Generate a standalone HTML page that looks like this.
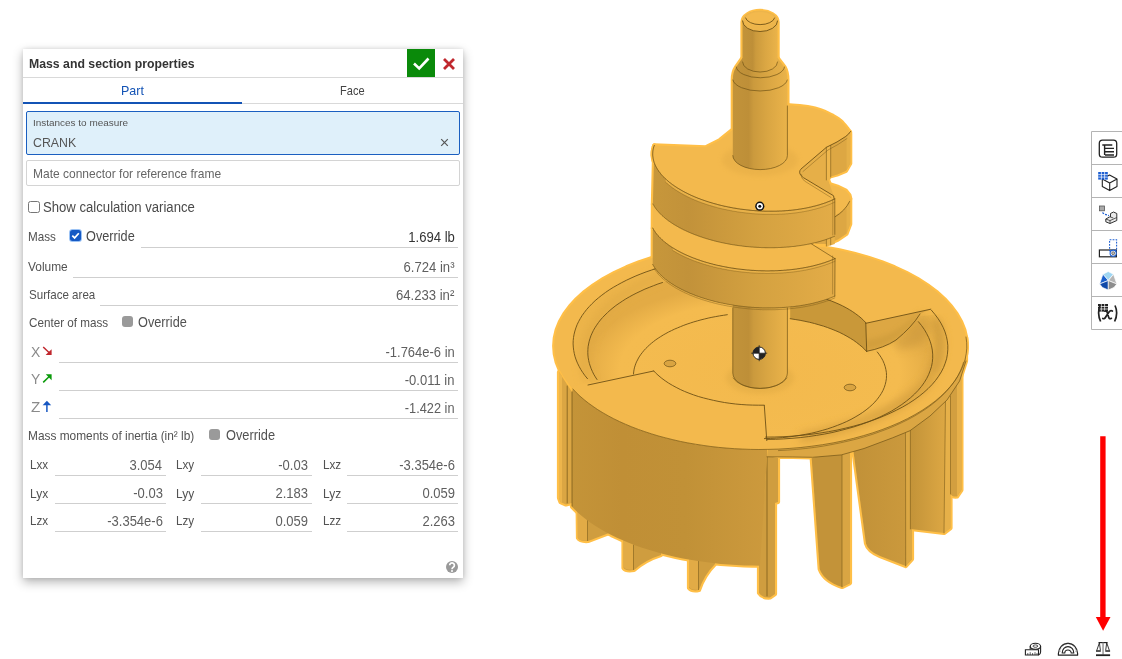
<!DOCTYPE html>
<html><head><meta charset="utf-8">
<style>
html,body{margin:0;padding:0;background:#fff;}
body{width:1122px;height:659px;position:relative;overflow:hidden;font-family:"Liberation Sans",sans-serif;}
#model{position:absolute;left:0;top:0;}
#dlg{position:absolute;left:23px;top:49px;width:440px;height:529px;background:#fff;box-shadow:0 4px 10px rgba(0,0,0,.30),0 0 4px rgba(0,0,0,.10);}
.t{position:absolute;white-space:nowrap;transform-origin:0 0;line-height:1;color:#555;font-size:13px;}
.r{transform-origin:100% 0;}
.ln{position:absolute;height:1px;background:#cfcfcf;}
.cb{position:absolute;width:11px;height:11px;border-radius:3px;background:#9a9a9a;}
</style></head><body>
<svg id="model" width="1122" height="659" viewBox="0 0 1122 659">

<defs>
<linearGradient id="gCyl" x1="0" x2="1" y1="0" y2="0"><stop offset="0" stop-color="#C2933A"/><stop offset=".29" stop-color="#BE8F38"/><stop offset=".38" stop-color="#CB9A3D"/><stop offset=".65" stop-color="#DAA643"/><stop offset="1" stop-color="#EAB34A"/></linearGradient>
<linearGradient id="gWeb" gradientUnits="userSpaceOnUse" x1="652" x2="835" y1="0" y2="0"><stop offset="0" stop-color="#C7973B"/><stop offset=".2" stop-color="#C2923A"/><stop offset=".4" stop-color="#CC9A3D"/><stop offset=".6" stop-color="#D5A241"/><stop offset=".8" stop-color="#DCA744"/><stop offset="1" stop-color="#E3AC47"/></linearGradient>
<linearGradient id="gWall" gradientUnits="userSpaceOnUse" x1="559" x2="770" y1="0" y2="0"><stop offset="0" stop-color="#C59539"/><stop offset=".3" stop-color="#C08F36"/><stop offset=".6" stop-color="#C19137"/><stop offset="1" stop-color="#CD9A3D"/></linearGradient>
<linearGradient id="gB3" gradientUnits="userSpaceOnUse" x1="912" x2="950" y1="0" y2="0"><stop offset="0" stop-color="#C49439"/><stop offset="1" stop-color="#E0AA45"/></linearGradient>
<linearGradient id="gB2" gradientUnits="userSpaceOnUse" x1="853" x2="912" y1="0" y2="0"><stop offset="0" stop-color="#C19138"/><stop offset="1" stop-color="#CC9A3D"/></linearGradient>
<radialGradient id="gFloor" gradientUnits="userSpaceOnUse" cx="760" cy="372" r="175" gradientTransform="translate(0 186) scale(1 .5)"><stop offset="0" stop-color="#F3B94D"/><stop offset=".8" stop-color="#F4BB4F"/><stop offset="1" stop-color="#E3AB45"/></radialGradient>
<filter id="blur2" x="-20%" y="-20%" width="140%" height="140%"><feGaussianBlur stdDeviation="2.5"/></filter>
<filter id="blur4" x="-20%" y="-20%" width="140%" height="140%"><feGaussianBlur stdDeviation="4"/></filter>
</defs>
<g fill="#FFBF47" stroke="#FFBF47" stroke-width="4.2" stroke-linejoin="round"><path d="M559.0 372.0 L572.0 392.0 L572.0 503.0 L566.0 504.5 L560.5 502.0 L559.0 498.0 Z"/><path d="M577.6 505 L578 538 Q580 541.5 588 541 Q596 538 609 533 L609 520 Z"/><path d="M623.5 535 L623.5 568 Q626 571.5 634 570 Q645 560 661 555 L661 545 Z"/><path d="M689 552 L689 588 Q692 591.5 699 590 Q704 575 715 564 L715 556 Z"/><path d="M759 560 L759 593 Q762 598 770 597.5 L775 594 L775 503 L778 502 L778 458 L767 456 Z"/><path d="M811.7 458 L819.7 569 Q824 581 842 587 L850 583 L850 449 Z"/><path d="M853 448 L866 543.4 Q868 551 880 556 L905.7 566 L912 559 L912 428 Z"/><path d="M910.4 425 L910.4 529 L944 533 L950.5 528 L950.5 392 Z"/><path d="M950.5 392 L950.5 494 Q952 497 957 496.5 L961.4 490 L961.4 374 Z"/><path d="M572.0 392.0 L572.8 388.9 L576.3 392.6 L580.0 396.2 L584.1 399.7 L588.4 403.1 L593.0 406.4 L597.8 409.7 L602.9 412.8 L608.3 415.9 L613.8 418.8 L619.6 421.6 L625.6 424.3 L631.8 426.9 L638.3 429.4 L644.9 431.7 L651.6 433.9 L658.6 436.0 L665.7 437.9 L672.9 439.7 L680.3 441.4 L687.8 442.9 L695.4 444.2 L703.1 445.4 L710.9 446.5 L718.8 447.4 L726.7 448.1 L734.7 448.7 L742.8 449.1 L750.8 449.4 L758.9 449.5 L767.0 449.4 L767.0 457.0 L760.0 565.7 L760.0 565.7 L752.1 565.6 L744.2 565.4 L736.3 565.0 L728.5 564.5 L720.7 563.9 L713.0 563.1 L705.3 562.1 L697.7 561.0 L690.2 559.8 L682.8 558.4 L675.6 556.9 L668.4 555.3 L661.4 553.5 L654.5 551.6 L647.8 549.6 L641.3 547.5 L634.9 545.2 L628.7 542.8 L622.7 540.3 L616.9 537.7 L611.3 535.0 L606.0 532.2 L600.8 529.3 L595.9 526.3 L591.3 523.2 L586.8 520.0 L582.7 516.8 L578.8 513.4 L575.2 510.0 L572.0 506.8 Z"/><path d="M767.7 449.4 L778.8 449.1 L789.9 448.4 L800.9 447.5 L811.8 446.2 L822.5 444.7 L833.1 442.9 L843.4 440.8 L853.5 438.4 L863.3 435.7 L872.9 432.8 L882.1 429.6 L890.9 426.2 L899.3 422.6 L907.4 418.7 L915.0 414.6 L922.2 410.3 L928.9 405.8 L935.1 401.2 L940.8 396.3 L945.9 391.4 L950.5 386.3 L954.6 381.1 L958.1 375.7 L961.0 370.3 L963.3 364.9 L965.1 359.3 L966.2 353.8 L966.8 348.2 L966.7 342.6 L966.0 337.0 L966.0 361.0 L959.6 381.0 L947.0 400.0 L930.0 416.0 L910.0 430.7 L892.6 437.8 L864.0 448.5 L841.3 454.9 L812.7 457.3 L792.8 457.0 L767.0 456.8 Z"/><path d="M966.8 346.0 L966.2 354.1 L964.3 362.2 L961.1 370.2 L956.7 378.0 L951.1 385.6 L944.3 393.0 L936.4 400.1 L927.4 406.8 L917.4 413.2 L906.4 419.2 L894.5 424.7 L881.8 429.7 L868.3 434.2 L854.2 438.2 L839.4 441.6 L824.3 444.4 L808.7 446.6 L792.8 448.2 L776.7 449.2 L760.5 449.5 L744.3 449.2 L728.2 448.2 L712.3 446.6 L696.7 444.4 L681.6 441.6 L666.8 438.2 L652.7 434.2 L639.2 429.7 L626.5 424.7 L614.6 419.2 L603.6 413.2 L593.6 406.8 L584.6 400.1 L576.7 393.0 L569.9 385.6 L564.3 378.0 L559.9 370.2 L556.7 362.2 L554.8 354.1 L554.2 346.0 L554.8 337.9 L556.7 329.8 L559.9 321.8 L564.3 314.0 L569.9 306.4 L576.7 299.0 L584.6 291.9 L593.6 285.2 L603.6 278.8 L614.6 272.8 L626.5 267.3 L639.2 262.3 L652.7 257.8 L666.8 253.8 L681.6 250.4 L696.7 247.6 L712.3 245.4 L728.2 243.8 L744.3 242.8 L760.5 242.5 L776.7 242.8 L792.8 243.8 L808.7 245.4 L824.3 247.6 L839.4 250.4 L854.2 253.8 L868.3 257.8 L881.8 262.3 L894.5 267.3 L906.4 272.8 L917.4 278.8 L927.4 285.2 L936.4 291.9 L944.3 299.0 L951.1 306.4 L956.7 314.0 L961.1 321.8 L964.3 329.8 L966.2 337.9 L966.8 346.0 Z"/><path d="M732.8 300 L732.8 373 A27.3 15.5 0 0 0 787.4 373 L787.4 300 Z"/><path d="M826.0 200.0 L827.6 183.4 L838.5 187.0 L845.8 190.7 L849.4 195.0 L850.2 198.5 L849.4 202.5 L845.0 209.0 L836.0 215.0 L834.8 217.0 L826.0 222.0 Z"/><path d="M826.0 222.0 L834.8 217.0 L836.0 215.0 L845.0 209.0 L849.4 202.5 L850.2 198.5 L850.2 224.0 L846.5 233.8 L838.0 239.5 L828.8 243.5 L826.4 244.0 L815.0 244.0 Z"/><path d="M652.8 228.1 L653.0 228.5 L653.2 229.0 L653.5 229.4 L653.7 229.8 L654.0 230.2 L654.2 230.6 L654.5 231.0 L654.8 231.4 L655.0 231.9 L655.3 232.3 L655.6 232.7 L655.9 233.1 L656.3 233.5 L656.6 233.9 L656.9 234.3 L657.2 234.7 L657.6 235.1 L657.9 235.5 L658.3 235.9 L658.6 236.3 L659.0 236.7 L659.4 237.1 L659.8 237.5 L660.2 237.9 L660.6 238.3 L661.0 238.7 L661.4 239.1 L661.8 239.5 L662.2 239.9 L662.7 240.3 L663.1 240.7 L663.5 241.1 L664.0 241.5 L664.5 241.8 L664.9 242.2 L665.4 242.6 L665.9 243.0 L666.4 243.4 L666.9 243.7 L667.4 244.1 L667.9 244.5 L668.4 244.9 L668.9 245.2 L669.4 245.6 L669.9 246.0 L670.5 246.3 L671.0 246.7 L671.6 247.1 L672.1 247.4 L672.7 247.8 L673.3 248.1 L673.8 248.5 L674.4 248.8 L675.0 249.2 L675.6 249.5 L676.2 249.9 L676.8 250.2 L677.4 250.6 L678.0 250.9 L678.6 251.2 L679.3 251.6 L679.9 251.9 L680.5 252.2 L681.2 252.6 L681.8 252.9 L682.5 253.2 L683.1 253.5 L683.8 253.9 L684.5 254.2 L685.1 254.5 L685.8 254.8 L686.5 255.1 L687.2 255.4 L687.9 255.7 L688.6 256.0 L689.3 256.3 L690.0 256.6 L690.7 256.9 L691.4 257.2 L692.2 257.5 L692.9 257.8 L693.6 258.1 L694.4 258.3 L695.1 258.6 L695.9 258.9 L696.6 259.2 L697.4 259.4 L698.1 259.7 L698.9 260.0 L699.7 260.2 L700.4 260.5 L701.2 260.8 L702.0 261.0 L702.8 261.3 L703.6 261.5 L704.4 261.8 L705.1 262.0 L705.9 262.2 L706.7 262.5 L707.6 262.7 L708.4 262.9 L709.2 263.2 L710.0 263.4 L710.8 263.6 L711.6 263.8 L712.5 264.0 L713.3 264.3 L714.1 264.5 L715.0 264.7 L715.8 264.9 L716.6 265.1 L717.5 265.3 L718.3 265.5 L719.2 265.6 L720.0 265.8 L720.9 266.0 L721.8 266.2 L722.6 266.4 L723.5 266.5 L724.4 266.7 L725.2 266.9 L726.1 267.0 L727.0 267.2 L727.8 267.4 L728.7 267.5 L729.6 267.7 L730.5 267.8 L731.4 268.0 L732.2 268.1 L733.1 268.2 L734.0 268.4 L734.9 268.5 L735.8 268.6 L736.7 268.8 L737.6 268.9 L738.5 269.0 L739.4 269.1 L740.3 269.2 L741.2 269.3 L742.1 269.4 L743.0 269.5 L743.9 269.6 L744.8 269.7 L745.7 269.8 L746.6 269.9 L747.5 270.0 L748.4 270.0 L749.3 270.1 L750.2 270.2 L751.1 270.3 L752.0 270.3 L752.9 270.4 L753.8 270.4 L754.8 270.5 L755.7 270.5 L756.6 270.6 L757.5 270.6 L758.4 270.7 L759.3 270.7 L760.2 270.7 L761.1 270.8 L762.0 270.8 L762.9 270.8 L763.8 270.8 L764.7 270.8 L765.7 270.9 L766.6 270.9 L767.5 270.9 L768.4 270.9 L769.3 270.9 L770.2 270.8 L771.1 270.8 L772.0 270.8 L772.9 270.8 L773.8 270.8 L774.7 270.8 L775.6 270.7 L776.5 270.7 L777.3 270.7 L778.2 270.6 L779.1 270.6 L780.0 270.5 L780.9 270.5 L781.8 270.4 L782.7 270.4 L783.5 270.3 L784.4 270.2 L785.3 270.2 L786.2 270.1 L787.0 270.0 L787.9 269.9 L788.8 269.9 L789.6 269.8 L790.5 269.7 L791.4 269.6 L792.2 269.5 L793.1 269.4 L793.9 269.3 L794.8 269.2 L795.6 269.1 L796.5 269.0 L797.3 268.8 L798.2 268.7 L799.0 268.6 L799.8 268.5 L800.6 268.3 L801.5 268.2 L802.3 268.1 L803.1 267.9 L803.9 267.8 L804.7 267.6 L805.6 267.5 L806.4 267.3 L807.2 267.2 L808.0 267.0 L808.8 266.8 L809.5 266.7 L810.3 266.5 L811.1 266.3 L811.9 266.2 L812.7 266.0 L813.4 265.8 L814.2 265.6 L815.0 265.4 L815.7 265.2 L816.5 265.0 L817.2 264.8 L818.0 264.6 L818.7 264.4 L819.4 264.2 L820.2 264.0 L820.9 263.8 L821.6 263.6 L822.3 263.3 L823.1 263.1 L823.8 262.9 L824.5 262.7 L825.2 262.4 L825.9 262.2 L826.5 261.9 L827.2 261.7 L827.9 261.5 L828.6 261.2 L829.3 261.0 L829.9 260.7 L830.6 260.4 L831.2 260.2 L831.9 259.9 L832.5 259.7 L833.1 259.4 L833.8 259.1 L834.4 258.8 L835.0 258.6 L834.8 296.1 L834.1 296.4 L833.5 296.7 L832.9 296.9 L832.2 297.2 L831.6 297.4 L830.9 297.7 L830.3 298.0 L829.6 298.2 L829.0 298.5 L828.3 298.7 L827.6 299.0 L826.9 299.2 L826.3 299.4 L825.6 299.7 L824.9 299.9 L824.2 300.1 L823.5 300.4 L822.8 300.6 L822.1 300.8 L821.3 301.0 L820.6 301.2 L819.9 301.4 L819.1 301.6 L818.4 301.8 L817.7 302.1 L816.9 302.2 L816.2 302.4 L815.4 302.6 L814.7 302.8 L813.9 303.0 L813.1 303.2 L812.4 303.4 L811.6 303.5 L810.8 303.7 L810.0 303.9 L809.2 304.1 L808.4 304.2 L807.6 304.4 L806.8 304.5 L806.0 304.7 L805.2 304.8 L804.4 305.0 L803.6 305.1 L802.8 305.3 L802.0 305.4 L801.1 305.5 L800.3 305.7 L799.5 305.8 L798.7 305.9 L797.8 306.0 L797.0 306.1 L796.1 306.2 L795.3 306.4 L794.4 306.5 L793.6 306.6 L792.7 306.7 L791.9 306.7 L791.0 306.8 L790.2 306.9 L789.3 307.0 L788.4 307.1 L787.6 307.2 L786.7 307.2 L785.8 307.3 L785.0 307.4 L784.1 307.4 L783.2 307.5 L782.3 307.5 L781.4 307.6 L780.6 307.6 L779.7 307.7 L778.8 307.7 L777.9 307.8 L777.0 307.8 L776.1 307.8 L775.2 307.9 L774.3 307.9 L773.4 307.9 L772.5 307.9 L771.6 307.9 L770.7 307.9 L769.8 307.9 L768.9 307.9 L768.0 307.9 L767.1 307.9 L766.2 307.9 L765.3 307.9 L764.4 307.9 L763.5 307.9 L762.6 307.9 L761.7 307.8 L760.8 307.8 L759.9 307.8 L759.0 307.7 L758.0 307.7 L757.1 307.6 L756.2 307.6 L755.3 307.5 L754.4 307.5 L753.5 307.4 L752.6 307.4 L751.7 307.3 L750.8 307.2 L749.9 307.1 L749.0 307.1 L748.1 307.0 L747.2 306.9 L746.2 306.8 L745.3 306.7 L744.4 306.6 L743.5 306.5 L742.6 306.4 L741.7 306.3 L740.8 306.2 L739.9 306.1 L739.0 306.0 L738.1 305.9 L737.3 305.7 L736.4 305.6 L735.5 305.5 L734.6 305.4 L733.7 305.2 L732.8 305.1 L731.9 304.9 L731.0 304.8 L730.1 304.6 L729.3 304.5 L728.4 304.3 L727.5 304.2 L726.6 304.0 L725.8 303.8 L724.9 303.7 L724.0 303.5 L723.2 303.3 L722.3 303.1 L721.4 303.0 L720.6 302.8 L719.7 302.6 L718.9 302.4 L718.0 302.2 L717.2 302.0 L716.3 301.8 L715.5 301.6 L714.7 301.4 L713.8 301.2 L713.0 300.9 L712.2 300.7 L711.3 300.5 L710.5 300.3 L709.7 300.1 L708.9 299.8 L708.1 299.6 L707.3 299.4 L706.5 299.1 L705.7 298.9 L704.9 298.6 L704.1 298.4 L703.3 298.1 L702.5 297.9 L701.7 297.6 L700.9 297.4 L700.2 297.1 L699.4 296.8 L698.6 296.6 L697.9 296.3 L697.1 296.0 L696.3 295.8 L695.6 295.5 L694.9 295.2 L694.1 294.9 L693.4 294.6 L692.6 294.3 L691.9 294.0 L691.2 293.7 L690.5 293.5 L689.8 293.2 L689.1 292.9 L688.4 292.5 L687.7 292.2 L687.0 291.9 L686.3 291.6 L685.6 291.3 L684.9 291.0 L684.2 290.7 L683.6 290.3 L682.9 290.0 L682.3 289.7 L681.6 289.4 L681.0 289.0 L680.3 288.7 L679.7 288.4 L679.1 288.0 L678.4 287.7 L677.8 287.4 L677.2 287.0 L676.6 286.7 L676.0 286.3 L675.4 286.0 L674.8 285.6 L674.2 285.3 L673.7 284.9 L673.1 284.5 L672.5 284.2 L672.0 283.8 L671.4 283.5 L670.9 283.1 L670.3 282.7 L669.8 282.4 L669.3 282.0 L668.7 281.6 L668.2 281.2 L667.7 280.9 L667.2 280.5 L666.7 280.1 L666.2 279.7 L665.7 279.4 L665.3 279.0 L664.8 278.6 L664.3 278.2 L663.9 277.8 L663.4 277.4 L663.0 277.0 L662.5 276.6 L662.1 276.2 L661.7 275.9 L661.3 275.5 L660.9 275.1 L660.5 274.7 L660.1 274.3 L659.7 273.9 L659.3 273.5 L658.9 273.1 L658.5 272.7 L658.2 272.2 L657.8 271.8 L657.5 271.4 L657.1 271.0 L656.8 270.6 L656.5 270.2 L656.2 269.8 L655.9 269.4 L655.6 269.0 L655.3 268.6 L655.0 268.1 L654.7 267.7 L654.4 267.3 L654.2 266.9 L653.9 266.5 L653.6 266.1 L653.4 265.7 L653.2 265.2 L652.9 264.8 L652.7 264.4 Z"/><path d="M652.9 204.0 L652.8 228.1 L653.0 228.5 L653.2 229.0 L653.5 229.4 L653.7 229.8 L654.0 230.2 L654.2 230.6 L654.5 231.0 L654.8 231.4 L655.0 231.9 L655.3 232.3 L655.6 232.7 L655.9 233.1 L656.3 233.5 L656.6 233.9 L656.9 234.3 L657.2 234.7 L657.6 235.1 L657.9 235.5 L658.3 235.9 L658.6 236.3 L659.0 236.7 L659.4 237.1 L659.8 237.5 L660.2 237.9 L660.6 238.3 L661.0 238.7 L661.4 239.1 L661.8 239.5 L662.2 239.9 L662.7 240.3 L663.1 240.7 L663.5 241.1 L664.0 241.5 L664.5 241.8 L664.9 242.2 L665.4 242.6 L665.9 243.0 L666.4 243.4 L666.9 243.7 L667.4 244.1 L667.9 244.5 L668.4 244.9 L668.9 245.2 L669.4 245.6 L669.9 246.0 L670.5 246.3 L671.0 246.7 L671.6 247.1 L672.1 247.4 L672.7 247.8 L673.3 248.1 L673.8 248.5 L674.4 248.8 L675.0 249.2 L675.6 249.5 L676.2 249.9 L676.8 250.2 L677.4 250.6 L678.0 250.9 L678.6 251.2 L679.3 251.6 L679.9 251.9 L680.5 252.2 L681.2 252.6 L681.8 252.9 L682.5 253.2 L683.1 253.5 L683.8 253.9 L684.5 254.2 L685.1 254.5 L685.8 254.8 L686.5 255.1 L687.2 255.4 L687.9 255.7 L688.6 256.0 L689.3 256.3 L690.0 256.6 L690.7 256.9 L691.4 257.2 L692.2 257.5 L692.9 257.8 L693.6 258.1 L694.4 258.3 L695.1 258.6 L695.9 258.9 L696.6 259.2 L697.4 259.4 L698.1 259.7 L698.9 260.0 L699.7 260.2 L700.4 260.5 L701.2 260.8 L702.0 261.0 L702.8 261.3 L703.6 261.5 L704.4 261.8 L705.1 262.0 L705.9 262.2 L706.7 262.5 L707.6 262.7 L708.4 262.9 L709.2 263.2 L710.0 263.4 L710.8 263.6 L711.6 263.8 L712.5 264.0 L713.3 264.3 L714.1 264.5 L715.0 264.7 L715.8 264.9 L716.6 265.1 L717.5 265.3 L718.3 265.5 L719.2 265.6 L720.0 265.8 L720.9 266.0 L721.8 266.2 L722.6 266.4 L723.5 266.5 L724.4 266.7 L725.2 266.9 L726.1 267.0 L727.0 267.2 L727.8 267.4 L728.7 267.5 L729.6 267.7 L730.5 267.8 L731.4 268.0 L732.2 268.1 L733.1 268.2 L734.0 268.4 L734.9 268.5 L735.8 268.6 L736.7 268.8 L737.6 268.9 L738.5 269.0 L739.4 269.1 L740.3 269.2 L741.2 269.3 L742.1 269.4 L743.0 269.5 L743.9 269.6 L744.8 269.7 L745.7 269.8 L746.6 269.9 L747.5 270.0 L748.4 270.0 L749.3 270.1 L750.2 270.2 L751.1 270.3 L752.0 270.3 L752.9 270.4 L753.8 270.4 L754.8 270.5 L755.7 270.5 L756.6 270.6 L757.5 270.6 L758.4 270.7 L759.3 270.7 L760.2 270.7 L761.1 270.8 L762.0 270.8 L762.9 270.8 L763.8 270.8 L764.7 270.8 L765.7 270.9 L766.6 270.9 L767.5 270.9 L768.4 270.9 L769.3 270.9 L770.2 270.8 L771.1 270.8 L772.0 270.8 L772.9 270.8 L773.8 270.8 L774.7 270.8 L775.6 270.7 L776.5 270.7 L777.3 270.7 L778.2 270.6 L779.1 270.6 L780.0 270.5 L780.9 270.5 L781.8 270.4 L782.7 270.4 L783.5 270.3 L784.4 270.2 L785.3 270.2 L786.2 270.1 L787.0 270.0 L787.9 269.9 L788.8 269.9 L789.6 269.8 L790.5 269.7 L791.4 269.6 L792.2 269.5 L793.1 269.4 L793.9 269.3 L794.8 269.2 L795.6 269.1 L796.5 269.0 L797.3 268.8 L798.2 268.7 L799.0 268.6 L799.8 268.5 L800.6 268.3 L801.5 268.2 L802.3 268.1 L803.1 267.9 L803.9 267.8 L804.7 267.6 L805.6 267.5 L806.4 267.3 L807.2 267.2 L808.0 267.0 L808.8 266.8 L809.5 266.7 L810.3 266.5 L811.1 266.3 L811.9 266.2 L812.7 266.0 L813.4 265.8 L814.2 265.6 L815.0 265.4 L815.7 265.2 L816.5 265.0 L817.2 264.8 L818.0 264.6 L818.7 264.4 L819.4 264.2 L820.2 264.0 L820.9 263.8 L821.6 263.6 L822.3 263.3 L823.1 263.1 L823.8 262.9 L824.5 262.7 L825.2 262.4 L825.9 262.2 L826.5 261.9 L827.2 261.7 L827.9 261.5 L828.6 261.2 L829.3 261.0 L829.9 260.7 L830.6 260.4 L831.2 260.2 L831.9 259.9 L832.5 259.7 L833.1 259.4 L833.8 259.1 L834.4 258.8 L835.0 258.6 L810.5 243.3 L800.0 230.0 L700.0 200.0 Z"/><path d="M654.3 145.4 L654.2 145.8 L654.0 146.2 L653.9 146.6 L653.8 147.0 L653.6 147.4 L653.5 147.9 L653.4 148.3 L653.3 148.7 L653.2 149.1 L653.1 149.5 L653.1 149.9 L653.0 150.3 L652.9 150.8 L652.9 151.2 L652.8 151.6 L652.8 152.0 L652.8 152.4 L652.7 152.9 L652.7 153.3 L652.7 153.7 L652.7 154.1 L652.7 154.6 L652.7 155.0 L652.7 155.4 L652.8 155.8 L652.8 156.3 L652.9 156.7 L652.9 157.1 L653.0 157.5 L653.0 158.0 L653.1 158.4 L653.2 158.8 L653.3 159.2 L653.4 159.7 L653.5 160.1 L653.6 160.5 L653.7 160.9 L653.8 161.4 L654.0 161.8 L654.1 162.2 L654.2 162.7 L654.4 163.1 L654.6 163.5 L654.7 163.9 L654.9 164.4 L655.1 164.8 L655.3 165.2 L655.5 165.6 L655.7 166.1 L655.9 166.5 L656.1 166.9 L656.4 167.3 L656.6 167.8 L656.8 168.2 L657.1 168.6 L657.3 169.0 L657.6 169.5 L657.9 169.9 L658.2 170.3 L658.5 170.7 L658.7 171.1 L659.0 171.6 L659.4 172.0 L659.7 172.4 L660.0 172.8 L660.3 173.2 L660.6 173.6 L661.0 174.0 L661.3 174.5 L661.7 174.9 L662.1 175.3 L662.4 175.7 L662.8 176.1 L663.2 176.5 L663.6 176.9 L664.0 177.3 L664.4 177.7 L664.8 178.1 L665.2 178.5 L665.6 178.9 L666.1 179.3 L666.5 179.7 L666.9 180.1 L667.4 180.5 L667.8 180.9 L668.3 181.3 L668.8 181.7 L669.2 182.1 L669.7 182.5 L670.2 182.8 L670.7 183.2 L671.2 183.6 L671.7 184.0 L672.2 184.4 L672.7 184.8 L673.3 185.1 L673.8 185.5 L674.3 185.9 L674.9 186.2 L675.4 186.6 L676.0 187.0 L676.5 187.3 L677.1 187.7 L677.7 188.1 L678.3 188.4 L678.8 188.8 L679.4 189.1 L680.0 189.5 L680.6 189.8 L681.2 190.2 L681.8 190.5 L682.5 190.9 L683.1 191.2 L683.7 191.6 L684.3 191.9 L685.0 192.2 L685.6 192.6 L686.3 192.9 L686.9 193.2 L687.6 193.6 L688.2 193.9 L688.9 194.2 L689.6 194.5 L690.2 194.8 L690.9 195.2 L691.6 195.5 L692.3 195.8 L693.0 196.1 L693.7 196.4 L694.4 196.7 L695.1 197.0 L695.8 197.3 L696.6 197.6 L697.3 197.9 L698.0 198.2 L698.7 198.5 L699.5 198.7 L700.2 199.0 L700.9 199.3 L701.7 199.6 L702.4 199.8 L703.2 200.1 L704.0 200.4 L704.7 200.6 L705.5 200.9 L706.3 201.2 L707.0 201.4 L707.8 201.7 L708.6 201.9 L709.4 202.2 L710.2 202.4 L711.0 202.6 L711.8 202.9 L712.6 203.1 L713.4 203.4 L714.2 203.6 L715.0 203.8 L715.8 204.0 L716.6 204.2 L717.4 204.5 L718.2 204.7 L719.0 204.9 L719.9 205.1 L720.7 205.3 L721.5 205.5 L722.4 205.7 L723.2 205.9 L724.0 206.1 L724.9 206.3 L725.7 206.4 L726.6 206.6 L727.4 206.8 L728.3 207.0 L729.1 207.1 L730.0 207.3 L730.8 207.5 L731.7 207.6 L732.5 207.8 L733.4 208.0 L734.2 208.1 L735.1 208.2 L736.0 208.4 L736.8 208.5 L737.7 208.7 L738.6 208.8 L739.4 208.9 L740.3 209.1 L741.2 209.2 L742.1 209.3 L742.9 209.4 L743.8 209.5 L744.7 209.6 L745.6 209.7 L746.4 209.8 L747.3 209.9 L748.2 210.0 L749.1 210.1 L750.0 210.2 L750.8 210.3 L751.7 210.4 L752.6 210.5 L753.5 210.5 L754.4 210.6 L755.2 210.7 L756.1 210.7 L757.0 210.8 L757.9 210.8 L758.8 210.9 L759.7 210.9 L760.5 211.0 L761.4 211.0 L762.3 211.1 L763.2 211.1 L764.1 211.1 L764.9 211.2 L765.8 211.2 L766.7 211.2 L767.6 211.2 L768.4 211.2 L769.3 211.2 L770.2 211.2 L771.1 211.2 L771.9 211.2 L772.8 211.2 L773.7 211.2 L774.6 211.2 L775.4 211.2 L776.3 211.2 L777.2 211.1 L778.0 211.1 L778.9 211.1 L779.7 211.0 L780.6 211.0 L781.5 211.0 L782.3 210.9 L783.2 210.9 L784.0 210.8 L784.9 210.8 L785.7 210.7 L786.6 210.6 L787.4 210.6 L788.2 210.5 L789.1 210.4 L789.9 210.3 L790.8 210.3 L791.6 210.2 L792.4 210.1 L793.2 210.0 L794.1 209.9 L794.9 209.8 L795.7 209.7 L796.5 209.6 L797.3 209.5 L798.1 209.4 L798.9 209.2 L799.7 209.1 L800.5 209.0 L801.3 208.9 L802.1 208.7 L802.9 208.6 L803.7 208.5 L804.5 208.3 L805.3 208.2 L806.1 208.0 L806.8 207.9 L807.6 207.7 L808.4 207.6 L809.1 207.4 L809.9 207.2 L810.6 207.1 L811.4 206.9 L812.1 206.7 L812.9 206.5 L813.6 206.3 L814.3 206.2 L815.1 206.0 L815.8 205.8 L816.5 205.6 L817.2 205.4 L817.9 205.2 L818.7 205.0 L819.4 204.8 L820.1 204.6 L820.8 204.3 L821.4 204.1 L822.1 203.9 L822.8 203.7 L823.5 203.5 L824.2 203.2 L824.8 203.0 L825.5 202.8 L826.1 202.5 L826.8 202.3 L827.4 202.0 L828.1 201.8 L828.7 201.5 L829.3 201.3 L830.0 201.0 L830.6 200.8 L831.2 200.5 L831.8 200.2 L832.4 200.0 L833.0 199.7 L833.6 199.4 L834.2 199.1 L834.8 198.9 L834.6 236.2 L833.9 236.5 L833.3 236.8 L832.7 237.0 L832.0 237.3 L831.4 237.5 L830.7 237.8 L830.1 238.0 L829.4 238.3 L828.8 238.5 L828.1 238.8 L827.4 239.0 L826.7 239.3 L826.0 239.5 L825.4 239.7 L824.7 240.0 L824.0 240.2 L823.3 240.4 L822.5 240.6 L821.8 240.8 L821.1 241.1 L820.4 241.3 L819.7 241.5 L818.9 241.7 L818.2 241.9 L817.4 242.1 L816.7 242.3 L815.9 242.5 L815.2 242.6 L814.4 242.8 L813.7 243.0 L812.9 243.2 L812.1 243.4 L811.3 243.5 L810.6 243.7 L809.8 243.9 L809.0 244.0 L808.2 244.2 L807.4 244.3 L806.6 244.5 L805.8 244.6 L805.0 244.8 L804.2 244.9 L803.4 245.1 L802.5 245.2 L801.7 245.3 L800.9 245.5 L800.1 245.6 L799.2 245.7 L798.4 245.8 L797.6 245.9 L796.7 246.0 L795.9 246.2 L795.0 246.3 L794.2 246.4 L793.3 246.5 L792.5 246.5 L791.6 246.6 L790.8 246.7 L789.9 246.8 L789.0 246.9 L788.2 247.0 L787.3 247.0 L786.4 247.1 L785.6 247.2 L784.7 247.2 L783.8 247.3 L782.9 247.3 L782.1 247.4 L781.2 247.4 L780.3 247.5 L779.4 247.5 L778.5 247.5 L777.6 247.6 L776.7 247.6 L775.8 247.6 L775.0 247.7 L774.1 247.7 L773.2 247.7 L772.3 247.7 L771.4 247.7 L770.5 247.7 L769.6 247.7 L768.7 247.7 L767.8 247.7 L766.9 247.7 L766.0 247.7 L765.0 247.7 L764.1 247.6 L763.2 247.6 L762.3 247.6 L761.4 247.6 L760.5 247.5 L759.6 247.5 L758.7 247.4 L757.8 247.4 L756.9 247.3 L756.0 247.3 L755.1 247.2 L754.2 247.2 L753.2 247.1 L752.3 247.0 L751.4 247.0 L750.5 246.9 L749.6 246.8 L748.7 246.7 L747.8 246.6 L746.9 246.6 L746.0 246.5 L745.1 246.4 L744.2 246.3 L743.3 246.2 L742.4 246.1 L741.5 245.9 L740.6 245.8 L739.7 245.7 L738.8 245.6 L737.9 245.5 L737.0 245.3 L736.1 245.2 L735.2 245.1 L734.3 244.9 L733.4 244.8 L732.6 244.7 L731.7 244.5 L730.8 244.4 L729.9 244.2 L729.0 244.0 L728.2 243.9 L727.3 243.7 L726.4 243.5 L725.5 243.4 L724.7 243.2 L723.8 243.0 L722.9 242.8 L722.1 242.7 L721.2 242.5 L720.4 242.3 L719.5 242.1 L718.7 241.9 L717.8 241.7 L717.0 241.5 L716.1 241.3 L715.3 241.1 L714.4 240.9 L713.6 240.6 L712.8 240.4 L711.9 240.2 L711.1 240.0 L710.3 239.7 L709.5 239.5 L708.7 239.3 L707.9 239.0 L707.1 238.8 L706.2 238.6 L705.4 238.3 L704.7 238.1 L703.9 237.8 L703.1 237.6 L702.3 237.3 L701.5 237.0 L700.7 236.8 L700.0 236.5 L699.2 236.2 L698.4 236.0 L697.7 235.7 L696.9 235.4 L696.2 235.1 L695.4 234.9 L694.7 234.6 L693.9 234.3 L693.2 234.0 L692.5 233.7 L691.7 233.4 L691.0 233.1 L690.3 232.8 L689.6 232.5 L688.9 232.2 L688.2 231.9 L687.5 231.6 L686.8 231.3 L686.1 230.9 L685.4 230.6 L684.7 230.3 L684.1 230.0 L683.4 229.7 L682.8 229.3 L682.1 229.0 L681.4 228.7 L680.8 228.3 L680.2 228.0 L679.5 227.7 L678.9 227.3 L678.3 227.0 L677.7 226.6 L677.1 226.3 L676.4 225.9 L675.8 225.6 L675.3 225.2 L674.7 224.9 L674.1 224.5 L673.5 224.2 L672.9 223.8 L672.4 223.4 L671.8 223.1 L671.3 222.7 L670.7 222.3 L670.2 222.0 L669.7 221.6 L669.1 221.2 L668.6 220.9 L668.1 220.5 L667.6 220.1 L667.1 219.7 L666.6 219.3 L666.1 219.0 L665.6 218.6 L665.1 218.2 L664.7 217.8 L664.2 217.4 L663.8 217.0 L663.3 216.6 L662.9 216.2 L662.4 215.8 L662.0 215.5 L661.6 215.1 L661.2 214.7 L660.8 214.3 L660.4 213.9 L660.0 213.5 L659.6 213.1 L659.2 212.6 L658.8 212.2 L658.5 211.8 L658.1 211.4 L657.8 211.0 L657.4 210.6 L657.1 210.2 L656.8 209.8 L656.4 209.4 L656.1 209.0 L655.8 208.6 L655.5 208.1 L655.2 207.7 L654.9 207.3 L654.6 206.9 L654.4 206.5 L654.1 206.1 L653.9 205.6 L653.6 205.2 L653.4 204.8 L653.1 204.4 L652.9 204.0 Z"/><path d="M799.7 172.7 L801.0 169.0 L826.4 147.3 L830.0 145.5 L845.8 136.4 L850.0 132.0 L850.2 134.0 L850.2 163.5 L846.0 170.7 L837.0 174.5 L828.8 176.8 L828.0 179.5 L833.6 195.8 L803.3 177.6 Z"/><path d="M654.3 145.4 L705.6 147.3 L720.0 140.0 L731.8 130.4 L760.0 110.0 L787.4 105.2 L789.6 105.4 L792.4 105.6 L795.9 105.9 L799.7 106.2 L803.7 106.6 L807.7 107.1 L811.5 107.7 L814.9 108.5 L818.1 109.5 L821.2 110.6 L824.4 111.8 L827.4 113.1 L830.3 114.6 L833.1 116.0 L835.7 117.5 L838.0 119.0 L840.1 120.6 L842.1 122.4 L843.8 124.3 L845.4 126.2 L846.9 128.0 L848.1 129.6 L849.2 131.0 L850.0 132.0 L845.8 136.4 L830.0 145.5 L826.4 147.3 L801.0 169.0 L799.7 172.7 L803.3 177.6 L833.6 195.8 L834.8 198.9 L834.2 199.1 L833.6 199.4 L833.0 199.7 L832.4 200.0 L831.8 200.2 L831.2 200.5 L830.6 200.8 L830.0 201.0 L829.3 201.3 L828.7 201.5 L828.1 201.8 L827.4 202.0 L826.8 202.3 L826.1 202.5 L825.5 202.8 L824.8 203.0 L824.2 203.2 L823.5 203.5 L822.8 203.7 L822.1 203.9 L821.4 204.1 L820.8 204.3 L820.1 204.6 L819.4 204.8 L818.7 205.0 L817.9 205.2 L817.2 205.4 L816.5 205.6 L815.8 205.8 L815.1 206.0 L814.3 206.2 L813.6 206.3 L812.9 206.5 L812.1 206.7 L811.4 206.9 L810.6 207.1 L809.9 207.2 L809.1 207.4 L808.4 207.6 L807.6 207.7 L806.8 207.9 L806.1 208.0 L805.3 208.2 L804.5 208.3 L803.7 208.5 L802.9 208.6 L802.1 208.7 L801.3 208.9 L800.5 209.0 L799.7 209.1 L798.9 209.2 L798.1 209.4 L797.3 209.5 L796.5 209.6 L795.7 209.7 L794.9 209.8 L794.1 209.9 L793.2 210.0 L792.4 210.1 L791.6 210.2 L790.8 210.3 L789.9 210.3 L789.1 210.4 L788.2 210.5 L787.4 210.6 L786.6 210.6 L785.7 210.7 L784.9 210.8 L784.0 210.8 L783.2 210.9 L782.3 210.9 L781.5 211.0 L780.6 211.0 L779.7 211.0 L778.9 211.1 L778.0 211.1 L777.2 211.1 L776.3 211.2 L775.4 211.2 L774.6 211.2 L773.7 211.2 L772.8 211.2 L771.9 211.2 L771.1 211.2 L770.2 211.2 L769.3 211.2 L768.4 211.2 L767.6 211.2 L766.7 211.2 L765.8 211.2 L764.9 211.2 L764.1 211.1 L763.2 211.1 L762.3 211.1 L761.4 211.0 L760.5 211.0 L759.7 210.9 L758.8 210.9 L757.9 210.8 L757.0 210.8 L756.1 210.7 L755.2 210.7 L754.4 210.6 L753.5 210.5 L752.6 210.5 L751.7 210.4 L750.8 210.3 L750.0 210.2 L749.1 210.1 L748.2 210.0 L747.3 209.9 L746.4 209.8 L745.6 209.7 L744.7 209.6 L743.8 209.5 L742.9 209.4 L742.1 209.3 L741.2 209.2 L740.3 209.1 L739.4 208.9 L738.6 208.8 L737.7 208.7 L736.8 208.5 L736.0 208.4 L735.1 208.2 L734.2 208.1 L733.4 208.0 L732.5 207.8 L731.7 207.6 L730.8 207.5 L730.0 207.3 L729.1 207.1 L728.3 207.0 L727.4 206.8 L726.6 206.6 L725.7 206.4 L724.9 206.3 L724.0 206.1 L723.2 205.9 L722.4 205.7 L721.5 205.5 L720.7 205.3 L719.9 205.1 L719.0 204.9 L718.2 204.7 L717.4 204.5 L716.6 204.2 L715.8 204.0 L715.0 203.8 L714.2 203.6 L713.4 203.4 L712.6 203.1 L711.8 202.9 L711.0 202.6 L710.2 202.4 L709.4 202.2 L708.6 201.9 L707.8 201.7 L707.0 201.4 L706.3 201.2 L705.5 200.9 L704.7 200.6 L704.0 200.4 L703.2 200.1 L702.4 199.8 L701.7 199.6 L700.9 199.3 L700.2 199.0 L699.5 198.7 L698.7 198.5 L698.0 198.2 L697.3 197.9 L696.6 197.6 L695.8 197.3 L695.1 197.0 L694.4 196.7 L693.7 196.4 L693.0 196.1 L692.3 195.8 L691.6 195.5 L690.9 195.2 L690.2 194.8 L689.6 194.5 L688.9 194.2 L688.2 193.9 L687.6 193.6 L686.9 193.2 L686.3 192.9 L685.6 192.6 L685.0 192.2 L684.3 191.9 L683.7 191.6 L683.1 191.2 L682.5 190.9 L681.8 190.5 L681.2 190.2 L680.6 189.8 L680.0 189.5 L679.4 189.1 L678.8 188.8 L678.3 188.4 L677.7 188.1 L677.1 187.7 L676.5 187.3 L676.0 187.0 L675.4 186.6 L674.9 186.2 L674.3 185.9 L673.8 185.5 L673.3 185.1 L672.7 184.8 L672.2 184.4 L671.7 184.0 L671.2 183.6 L670.7 183.2 L670.2 182.8 L669.7 182.5 L669.2 182.1 L668.8 181.7 L668.3 181.3 L667.8 180.9 L667.4 180.5 L666.9 180.1 L666.5 179.7 L666.1 179.3 L665.6 178.9 L665.2 178.5 L664.8 178.1 L664.4 177.7 L664.0 177.3 L663.6 176.9 L663.2 176.5 L662.8 176.1 L662.4 175.7 L662.1 175.3 L661.7 174.9 L661.3 174.5 L661.0 174.0 L660.6 173.6 L660.3 173.2 L660.0 172.8 L659.7 172.4 L659.4 172.0 L659.0 171.6 L658.7 171.1 L658.5 170.7 L658.2 170.3 L657.9 169.9 L657.6 169.5 L657.3 169.0 L657.1 168.6 L656.8 168.2 L656.6 167.8 L656.4 167.3 L656.1 166.9 L655.9 166.5 L655.7 166.1 L655.5 165.6 L655.3 165.2 L655.1 164.8 L654.9 164.4 L654.7 163.9 L654.6 163.5 L654.4 163.1 L654.2 162.7 L654.1 162.2 L654.0 161.8 L653.8 161.4 L653.7 160.9 L653.6 160.5 L653.5 160.1 L653.4 159.7 L653.3 159.2 L653.2 158.8 L653.1 158.4 L653.0 158.0 L653.0 157.5 L652.9 157.1 L652.9 156.7 L652.8 156.3 L652.8 155.8 L652.7 155.4 L652.7 155.0 L652.7 154.6 L652.7 154.1 L652.7 153.7 L652.7 153.3 L652.7 152.9 L652.8 152.4 L652.8 152.0 L652.8 151.6 L652.9 151.2 L652.9 150.8 L653.0 150.3 L653.1 149.9 L653.1 149.5 L653.2 149.1 L653.3 148.7 L653.4 148.3 L653.5 147.9 L653.6 147.4 L653.8 147.0 L653.9 146.6 L654.0 146.2 L654.2 145.8 L654.3 145.4 Z"/><path d="M732.8 80 L732.8 155.6 A27.3 14 0 0 0 787.4 155.6 L787.4 80 Q787.4 72 784.5 67 L777.6 58 L742.5 58 L736.2 67 Q732.8 72 732.8 80 Z"/><path d="M742.5 22 L742.5 62 A17.5 10 0 0 0 777.6 62 L777.6 22 A17.5 11 0 0 0 742.5 22 Z"/></g>
<path d="M559.0 372.0 L572.0 392.0 L572.0 503.0 L566.0 504.5 L560.5 502.0 L559.0 498.0 Z" fill="#DBA643" />
<path d="M559.0 372.0 L562.0 376.0 L562.0 503.0 L560.5 502.0 L559.0 498.0 Z" fill="#EDB54B" />
<path d="M567.2 386 L567.2 503" fill="none" stroke="#6b4f14" stroke-width="0.85" opacity="0.78" stroke-linecap="round" stroke-linejoin="round"/>
<path d="M577.6 505 L578 538 Q580 541.5 588 541 Q596 538 609 533 L609 520 Z" fill="#CF9D3F" />
<path d="M577.6 504 L577.6 537.5 Q579.6 541.5 587.5 540.5 L587.5 506 Z" fill="#E2AB46"/>
<path d="M587.5 512 L587.5 540.5" fill="none" stroke="#6b4f14" stroke-width="0.75" opacity="0.6799999999999999" stroke-linecap="round" stroke-linejoin="round"/>
<path d="M623.5 535 L623.5 568 Q626 571.5 634 570 Q645 560 661 555 L661 545 Z" fill="#CF9D3F" />
<path d="M623.5 537 L623.5 566.5 Q625.5 570.5 633.5 569.5 L633.5 539 Z" fill="#E2AB46"/>
<path d="M633.5 545 L633.5 569.5" fill="none" stroke="#6b4f14" stroke-width="0.75" opacity="0.6799999999999999" stroke-linecap="round" stroke-linejoin="round"/>
<path d="M689 552 L689 588 Q692 591.5 699 590 Q704 575 715 564 L715 556 Z" fill="#CF9D3F" />
<path d="M689.0 550 L689.0 586.5 Q691.0 590.5 698.5 589.5 L698.5 552 Z" fill="#E2AB46"/>
<path d="M698.5 558 L698.5 589.5" fill="none" stroke="#6b4f14" stroke-width="0.75" opacity="0.6799999999999999" stroke-linecap="round" stroke-linejoin="round"/>
<path d="M759 560 L759 593 Q762 598 770 597.5 L775 594 L775 503 L778 502 L778 458 L767 456 Z" fill="#CF9D3F" />
<path d="M767 457 L767 596" fill="none" stroke="#6b4f14" stroke-width="0.85" opacity="0.78" stroke-linecap="round" stroke-linejoin="round"/>
<path d="M811.7 458 L819.7 569 Q824 581 842 587 L850 583 L850 449 Z" fill="#C39339" />
<path d="M842 587 L850 583 L850 449 L842 451 Z" fill="#D9A543" />
<path d="M842 452 L842 587" fill="none" stroke="#6b4f14" stroke-width="0.75" opacity="0.6799999999999999" stroke-linecap="round" stroke-linejoin="round"/>
<path d="M853 448 L866 543.4 Q868 551 880 556 L905.7 566 L912 559 L912 428 Z" fill="url(#gB2)" />
<path d="M905.7 566 L912 559 L912 428 L905 432 Z" fill="#DCA844" />
<path d="M905.5 433 L905.7 566" fill="none" stroke="#6b4f14" stroke-width="0.75" opacity="0.6799999999999999" stroke-linecap="round" stroke-linejoin="round"/>
<path d="M910.4 425 L910.4 529 L944 533 L950.5 528 L950.5 392 Z" fill="url(#gB3)" />
<path d="M944 533 L950.5 528 L950.5 392 L945.5 396 Z" fill="#E6B049" />
<path d="M910.4 430 L910.4 529" fill="none" stroke="#6b4f14" stroke-width="0.75" opacity="0.6799999999999999" stroke-linecap="round" stroke-linejoin="round"/>
<path d="M945.5 398 L944 533" fill="none" stroke="#6b4f14" stroke-width="0.75" opacity="0.6799999999999999" stroke-linecap="round" stroke-linejoin="round"/>
<path d="M950.5 392 L950.5 494 Q952 497 957 496.5 L961.4 490 L961.4 374 Z" fill="#D29F40" />
<path d="M957 496.5 L961.4 490 L961.4 374 L957 380 Z" fill="#E6B049" />
<path d="M950.5 396 L950.5 494" fill="none" stroke="#6b4f14" stroke-width="0.75" opacity="0.6799999999999999" stroke-linecap="round" stroke-linejoin="round"/>
<path d="M572.0 392.0 L572.8 388.9 L576.3 392.6 L580.0 396.2 L584.1 399.7 L588.4 403.1 L593.0 406.4 L597.8 409.7 L602.9 412.8 L608.3 415.9 L613.8 418.8 L619.6 421.6 L625.6 424.3 L631.8 426.9 L638.3 429.4 L644.9 431.7 L651.6 433.9 L658.6 436.0 L665.7 437.9 L672.9 439.7 L680.3 441.4 L687.8 442.9 L695.4 444.2 L703.1 445.4 L710.9 446.5 L718.8 447.4 L726.7 448.1 L734.7 448.7 L742.8 449.1 L750.8 449.4 L758.9 449.5 L767.0 449.4 L767.0 457.0 L760.0 565.7 L760.0 565.7 L752.1 565.6 L744.2 565.4 L736.3 565.0 L728.5 564.5 L720.7 563.9 L713.0 563.1 L705.3 562.1 L697.7 561.0 L690.2 559.8 L682.8 558.4 L675.6 556.9 L668.4 555.3 L661.4 553.5 L654.5 551.6 L647.8 549.6 L641.3 547.5 L634.9 545.2 L628.7 542.8 L622.7 540.3 L616.9 537.7 L611.3 535.0 L606.0 532.2 L600.8 529.3 L595.9 526.3 L591.3 523.2 L586.8 520.0 L582.7 516.8 L578.8 513.4 L575.2 510.0 L572.0 506.8 Z" fill="url(#gWall)" />
<path d="M572 392 L572 506" fill="none" stroke="#6b4f14" stroke-width="0.85" opacity="0.78" stroke-linecap="round" stroke-linejoin="round"/>
<path d="M767.7 449.4 L778.8 449.1 L789.9 448.4 L800.9 447.5 L811.8 446.2 L822.5 444.7 L833.1 442.9 L843.4 440.8 L853.5 438.4 L863.3 435.7 L872.9 432.8 L882.1 429.6 L890.9 426.2 L899.3 422.6 L907.4 418.7 L915.0 414.6 L922.2 410.3 L928.9 405.8 L935.1 401.2 L940.8 396.3 L945.9 391.4 L950.5 386.3 L954.6 381.1 L958.1 375.7 L961.0 370.3 L963.3 364.9 L965.1 359.3 L966.2 353.8 L966.8 348.2 L966.7 342.6 L966.0 337.0 L966.0 361.0 L959.6 381.0 L947.0 400.0 L930.0 416.0 L910.0 430.7 L892.6 437.8 L864.0 448.5 L841.3 454.9 L812.7 457.3 L792.8 457.0 L767.0 456.8 Z" fill="#DBA643" />
<path d="M767.0 456.8 L792.8 457.0 L812.7 457.3 L841.3 454.9 L864.0 448.5 L892.6 437.8 L910.0 430.7 L930.0 416.0 L947.0 400.0 L959.6 381.0 L966.0 361.0" fill="none" stroke="#6b4f14" stroke-width="0.85" opacity="0.78" stroke-linecap="round" stroke-linejoin="round"/>
<path d="M966.8 346.0 L966.2 354.1 L964.3 362.2 L961.1 370.2 L956.7 378.0 L951.1 385.6 L944.3 393.0 L936.4 400.1 L927.4 406.8 L917.4 413.2 L906.4 419.2 L894.5 424.7 L881.8 429.7 L868.3 434.2 L854.2 438.2 L839.4 441.6 L824.3 444.4 L808.7 446.6 L792.8 448.2 L776.7 449.2 L760.5 449.5 L744.3 449.2 L728.2 448.2 L712.3 446.6 L696.7 444.4 L681.6 441.6 L666.8 438.2 L652.7 434.2 L639.2 429.7 L626.5 424.7 L614.6 419.2 L603.6 413.2 L593.6 406.8 L584.6 400.1 L576.7 393.0 L569.9 385.6 L564.3 378.0 L559.9 370.2 L556.7 362.2 L554.8 354.1 L554.2 346.0 L554.8 337.9 L556.7 329.8 L559.9 321.8 L564.3 314.0 L569.9 306.4 L576.7 299.0 L584.6 291.9 L593.6 285.2 L603.6 278.8 L614.6 272.8 L626.5 267.3 L639.2 262.3 L652.7 257.8 L666.8 253.8 L681.6 250.4 L696.7 247.6 L712.3 245.4 L728.2 243.8 L744.3 242.8 L760.5 242.5 L776.7 242.8 L792.8 243.8 L808.7 245.4 L824.3 247.6 L839.4 250.4 L854.2 253.8 L868.3 257.8 L881.8 262.3 L894.5 267.3 L906.4 272.8 L917.4 278.8 L927.4 285.2 L936.4 291.9 L944.3 299.0 L951.1 306.4 L956.7 314.0 L961.1 321.8 L964.3 329.8 L966.2 337.9 L966.8 346.0 Z" fill="#F3B94D" />
<ellipse cx="760.5" cy="345.7" rx="187.4" ry="91.4" fill="#ECB44A" transform="rotate(0.9 760 346)"/>
<ellipse cx="760.3" cy="354" rx="172.5" ry="85.4" fill="url(#gFloor)" transform="rotate(0.9 760 354)"/>
<path d="M588 380 Q575 340 610 305 Q640 280 680 270" fill="none" stroke="#DFA842" stroke-width="9" filter="url(#blur4)" opacity=".6"/>
<path d="M935 320 Q948 350 925 385 Q890 420 800 438" fill="none" stroke="#D39E3E" stroke-width="9" filter="url(#blur4)" opacity=".8"/>
<path d="M653.7 370.9 L656.2 373.5 L659.0 376.0 L661.9 378.4 L665.2 380.8 L668.6 383.1 L672.3 385.3 L676.2 387.4 L680.3 389.5 L684.5 391.4 L689.0 393.2 L693.6 394.9 L698.4 396.5 L703.4 397.9 L708.5 399.2 L713.7 400.4 L719.0 401.5 L724.4 402.5 L729.9 403.3 L735.5 404.0 L741.2 404.5 L746.9 404.9 L752.6 405.1 L758.3 405.2 L764.1 405.2 L767.7 449.4 L757.3 449.5 L747.0 449.3 L736.7 448.8 L726.5 448.1 L716.3 447.1 L706.2 445.9 L696.3 444.4 L686.6 442.6 L677.0 440.6 L667.6 438.4 L658.5 436.0 L649.7 433.3 L641.1 430.4 L632.8 427.3 L624.8 424.0 L617.2 420.5 L609.9 416.8 L603.0 412.9 L596.6 408.8 L590.5 404.6 L584.8 400.3 L579.6 395.8 L574.9 391.2 L570.6 386.4 Z" fill="#F3B94D"/>
<path d="M865.8 322.7 L862.2 319.1 L858.1 315.6 L853.5 312.3 L848.5 309.1 L843.0 306.1 L837.2 303.4 L830.9 300.8 L824.4 298.4 L817.5 296.3 L810.3 294.5 L802.9 292.8 L795.3 291.5 L787.6 290.4 L779.6 289.6 L771.6 289.0 L763.6 288.8 L755.5 288.8 L747.5 289.1 L739.5 289.7 L731.6 290.5 L723.8 291.6 L716.2 293.0 L708.9 294.7 L701.8 296.6 L657.4 256.4 L670.7 252.8 L684.6 249.8 L698.9 247.2 L713.5 245.2 L728.4 243.8 L743.4 242.9 L758.5 242.5 L773.7 242.7 L788.8 243.5 L803.7 244.8 L818.4 246.7 L832.7 249.1 L846.7 252.0 L860.3 255.4 L873.2 259.3 L885.6 263.7 L897.3 268.5 L908.3 273.8 L918.4 279.4 L927.8 285.4 L936.2 291.7 L943.6 298.3 L950.1 305.2 L955.6 312.3 Z" fill="#F3B94D"/>
<path d="M922 313 L916 322 L905 333 L893 342 L900 350 L918 346 L929 336 L931 322 Z" fill="#C4933A" opacity=".5" filter="url(#blur4)"/>
<path d="M938 318 Q949 345 938 372 L930 370 Q940 345 931 320 Z" fill="#CF9C3E" opacity=".45" filter="url(#blur2)"/>
<path d="M865.8 322.7 L863.6 320.4 L861.2 318.1 L858.5 315.9 L855.7 313.8 L852.7 311.7 L849.5 309.7 L846.2 307.8 L842.6 305.9 L839.0 304.2 L835.1 302.5 L831.1 300.9 L827.0 299.4 L822.8 297.9 L818.4 296.6 L813.9 295.4 L809.3 294.2 L804.7 293.2 L799.9 292.3 L795.1 291.5 L790.2 290.7 L790.2 318.7 L795.2 319.5 L800.1 320.3 L804.9 321.3 L809.7 322.3 L814.4 323.5 L818.9 324.8 L823.4 326.1 L827.7 327.6 L831.9 329.2 L835.9 330.8 L839.8 332.5 L843.5 334.4 L847.0 336.3 L850.4 338.3 L853.6 340.3 L856.6 342.5 L859.4 344.7 L862.1 346.9 L864.5 349.2 L866.7 351.6 Z" fill="#C99839"/>
<path d="M865.8 323.3 L930.8 309.2 Q926 311 920 314 Q913 326 895 341.7 Q882 348 866.7 351.3 Z" fill="#DDA743"/>
<path d="M866 350 Q885 347 897 338 Q912 326 921 313 L912 318 Q895 336 866 340 Z" fill="#C99839" opacity=".55" filter="url(#blur2)"/>
<path d="M587.5 378.7 L585.0 375.7 L582.8 372.6 L580.8 369.5 L579.1 366.4 L577.5 363.2 L576.2 360.0 L575.1 356.8 L574.3 353.6 L573.7 350.4 L573.3 347.1 L573.1 343.9 L573.2 340.7 L573.5 337.5 L574.1 334.2 L574.9 331.0 L575.9 327.9 L577.1 324.7 L578.6 321.6 L580.3 318.5 L582.2 315.4 L584.4 312.4 L586.7 309.4 L589.3 306.5 L592.1 303.6 L595.1 300.7 L598.4 297.9 L601.8 295.2 L605.4 292.5 L609.2 289.9 L613.2 287.4 L617.4 285.0 L621.8 282.6 L626.3 280.3 L631.0 278.1 L635.9 275.9 L640.9 273.9 L646.1 271.9 L651.4 270.1 L656.8 268.3 L662.4 266.6" fill="none" stroke="#6b4f14" stroke-width="0.9500000000000001" opacity="0.9299999999999999" stroke-linecap="round" stroke-linejoin="round"/>
<path d="M931.5 310.3 L935.0 314.5 L938.2 318.8 L940.9 323.1 L943.2 327.5 L945.0 331.9 L946.4 336.4 L947.3 340.8 L947.8 345.3 L947.8 349.8 L947.4 354.3 L946.6 358.8 L945.2 363.2 L943.5 367.6 L941.3 371.9 L938.6 376.2 L935.6 380.4 L932.1 384.5 L928.2 388.5 L923.9 392.4 L919.2 396.2 L914.1 399.9 L908.6 403.5 L902.8 406.9 L896.6 410.1 L890.2 413.2 L883.4 416.2 L876.3 419.0 L868.9 421.6 L861.3 424.0 L853.4 426.2 L845.3 428.2 L837.0 430.1 L828.5 431.7 L819.8 433.1 L811.0 434.3 L802.1 435.3 L793.1 436.1 L784.0 436.7 L774.8 437.0 L765.6 437.1" fill="none" stroke="#6b4f14" stroke-width="0.9500000000000001" opacity="0.9299999999999999" stroke-linecap="round" stroke-linejoin="round"/>
<path d="M597.0 379.5 L595.3 376.9 L593.7 374.2 L592.4 371.5 L591.2 368.8 L590.2 366.0 L589.3 363.3 L588.7 360.6 L588.2 357.8 L587.9 355.0 L587.8 352.3 L587.9 349.5 L588.1 346.7 L588.6 344.0 L589.2 341.2 L590.0 338.5 L590.9 335.8 L592.1 333.1 L593.4 330.4 L594.9 327.8 L596.6 325.2 L598.4 322.6 L600.4 320.0 L602.6 317.5 L605.0 315.0 L607.5 312.6 L610.1 310.2 L613.0 307.8 L615.9 305.5 L619.1 303.3 L622.4 301.1 L625.8 298.9 L629.3 296.9 L633.1 294.8 L636.9 292.9 L640.9 291.0 L644.9 289.1 L649.2 287.4 L653.5 285.7 L657.9 284.0 L662.5 282.5" fill="none" stroke="#6b4f14" stroke-width="0.9500000000000001" opacity="0.9299999999999999" stroke-linecap="round" stroke-linejoin="round"/>
<path d="M918.4 321.7 L921.6 325.6 L924.4 329.6 L926.7 333.6 L928.7 337.6 L930.3 341.7 L931.5 345.8 L932.3 350.0 L932.7 354.1 L932.7 358.3 L932.3 362.4 L931.5 366.5 L930.2 370.6 L928.6 374.7 L926.6 378.7 L924.2 382.6 L921.4 386.5 L918.2 390.3 L914.6 394.0 L910.7 397.6 L906.4 401.1 L901.8 404.5 L896.8 407.8 L891.6 411.0 L886.0 414.0 L880.1 416.9 L873.9 419.6 L867.5 422.2 L860.8 424.6 L853.9 426.9 L846.7 428.9 L839.4 430.8 L831.9 432.6 L824.2 434.1 L816.3 435.4 L808.3 436.6 L800.2 437.6 L792.0 438.3 L783.8 438.9 L775.4 439.3 L767.1 439.4" fill="none" stroke="#6b4f14" stroke-width="0.9500000000000001" opacity="0.9299999999999999" stroke-linecap="round" stroke-linejoin="round"/>
<path d="M633.5 374.0 L633.7 371.9 L634.0 369.9 L634.4 367.9 L635.0 365.9 L635.7 363.9 L636.5 361.9 L637.5 360.0 L638.5 358.0 L639.7 356.1 L641.0 354.2 L642.5 352.3 L644.0 350.4 L645.7 348.6 L647.5 346.8 L649.4 345.0 L651.5 343.2 L653.6 341.5 L655.8 339.8 L658.2 338.2 L660.7 336.6 L663.2 335.0 L665.9 333.5 L668.6 332.0 L671.5 330.6 L674.4 329.2 L677.5 327.9 L680.6 326.6 L683.8 325.3 L687.1 324.1 L690.4 323.0 L693.8 321.9 L697.3 320.9 L700.9 319.9 L704.5 319.0 L708.2 318.1 L711.9 317.3 L715.7 316.6 L719.5 315.9 L723.4 315.3 L727.3 314.7" fill="none" stroke="#6b4f14" stroke-width="0.9500000000000001" opacity="0.9299999999999999" stroke-linecap="round" stroke-linejoin="round"/>
<path d="M877.3 352.0 L879.4 354.8 L881.3 357.7 L882.9 360.6 L884.2 363.6 L885.2 366.6 L885.9 369.6 L886.4 372.6 L886.5 375.6 L886.4 378.6 L885.9 381.6 L885.2 384.6 L884.2 387.6 L882.9 390.6 L881.3 393.5 L879.4 396.4 L877.3 399.2 L874.9 402.0 L872.2 404.7 L869.3 407.3 L866.1 409.9 L862.7 412.4 L859.0 414.8 L855.1 417.1 L851.0 419.4 L846.7 421.5 L842.2 423.5 L837.4 425.4 L832.6 427.2 L827.5 428.9 L822.3 430.4 L816.9 431.9 L811.5 433.2 L805.8 434.3 L800.1 435.3 L794.3 436.2 L788.5 437.0 L782.5 437.6 L776.5 438.1 L770.5 438.4 L764.4 438.6" fill="none" stroke="#6b4f14" stroke-width="0.9500000000000001" opacity="0.9299999999999999" stroke-linecap="round" stroke-linejoin="round"/>
<path d="M653.7 370.9 L656.2 373.5 L659.0 376.0 L661.9 378.4 L665.2 380.8 L668.6 383.1 L672.3 385.3 L676.2 387.4 L680.3 389.5 L684.5 391.4 L689.0 393.2 L693.6 394.9 L698.4 396.5 L703.4 397.9 L708.5 399.2 L713.7 400.4 L719.0 401.5 L724.4 402.5 L729.9 403.3 L735.5 404.0 L741.2 404.5 L746.9 404.9 L752.6 405.1 L758.3 405.2 L764.1 405.2" fill="none" stroke="#6b4f14" stroke-width="0.9500000000000001" opacity="0.9299999999999999" stroke-linecap="round" stroke-linejoin="round"/>
<path d="M588 385 L653.7 371" fill="none" stroke="#6b4f14" stroke-width="0.9500000000000001" opacity="0.9299999999999999" stroke-linecap="round" stroke-linejoin="round"/>
<path d="M764.3 405.4 L766.8 440.6" fill="none" stroke="#6b4f14" stroke-width="0.9500000000000001" opacity="0.9299999999999999" stroke-linecap="round" stroke-linejoin="round"/>
<path d="M865.8 322.7 L863.6 320.4 L861.2 318.1 L858.5 315.9 L855.7 313.8 L852.7 311.7 L849.5 309.7 L846.2 307.8 L842.6 305.9 L839.0 304.2 L835.1 302.5 L831.1 300.9 L827.0 299.4 L822.8 297.9 L818.4 296.6 L813.9 295.4 L809.3 294.2 L804.7 293.2 L799.9 292.3 L795.1 291.5 L790.2 290.7" fill="none" stroke="#6b4f14" stroke-width="0.9500000000000001" opacity="0.9299999999999999" stroke-linecap="round" stroke-linejoin="round"/>
<path d="M790.2 318.7 L795.2 319.5 L800.1 320.3 L804.9 321.3 L809.7 322.3 L814.4 323.5 L818.9 324.8 L823.4 326.1 L827.7 327.6 L831.9 329.2 L835.9 330.8 L839.8 332.5 L843.5 334.4 L847.0 336.3 L850.4 338.3 L853.6 340.3 L856.6 342.5 L859.4 344.7 L862.1 346.9 L864.5 349.2 L866.7 351.6" fill="none" stroke="#6b4f14" stroke-width="0.9500000000000001" opacity="0.9299999999999999" stroke-linecap="round" stroke-linejoin="round"/>
<path d="M865.8 323.3 L930.8 309.2" fill="none" stroke="#6b4f14" stroke-width="0.9500000000000001" opacity="0.9299999999999999" stroke-linecap="round" stroke-linejoin="round"/>
<path d="M865.8 323.3 L866.7 351.3" fill="none" stroke="#6b4f14" stroke-width="0.9500000000000001" opacity="0.9299999999999999" stroke-linecap="round" stroke-linejoin="round"/>
<path d="M866.7 351.3 Q884 348 896 340 Q912 327 920 314" fill="none" stroke="#6b4f14" stroke-width="0.9500000000000001" opacity="0.8799999999999999" stroke-linecap="round" stroke-linejoin="round"/>
<path d="M778.4 450.6 L787.5 450.1 L796.6 449.4 L805.6 448.5 L814.5 447.4 L823.3 446.1 L832.0 444.5 L840.5 442.8 L848.9 440.9 L857.1 438.9 L865.1 436.6 L872.9 434.2 L880.4 431.5 L887.7 428.8 L894.8 425.8 L901.6 422.7 L908.1 419.5 L914.4 416.1 L920.3 412.5 L925.9 408.9 L931.1 405.1 L936.0 401.2 L940.6 397.2 L944.8 393.1 L948.6 388.9 L952.1 384.6 L955.2 380.3 L957.9 375.9 L960.1 371.4 L962.0 366.9 L963.5 362.3" fill="none" stroke="#6b4f14" stroke-width="0.75" opacity="0.6799999999999999" stroke-linecap="round" stroke-linejoin="round"/>
<path d="M572.8 388.9 L576.3 392.6 L580.0 396.2 L584.1 399.7 L588.4 403.1 L593.0 406.4 L597.8 409.7 L602.9 412.8 L608.3 415.9 L613.8 418.8 L619.6 421.6 L625.6 424.3 L631.8 426.9 L638.3 429.4 L644.9 431.7 L651.6 433.9 L658.6 436.0 L665.7 437.9 L672.9 439.7 L680.3 441.4 L687.8 442.9 L695.4 444.2 L703.1 445.4 L710.9 446.5 L718.8 447.4 L726.7 448.1 L734.7 448.7 L742.8 449.1 L750.8 449.4 L758.9 449.5 L767.0 449.4" fill="none" stroke="#6b4f14" stroke-width="0.85" opacity="0.78" stroke-linecap="round" stroke-linejoin="round"/>
<path d="M767.7 449.4 L778.8 449.1 L789.9 448.4 L800.9 447.5 L811.8 446.2 L822.5 444.7 L833.1 442.9 L843.4 440.8 L853.5 438.4 L863.3 435.7 L872.9 432.8 L882.1 429.6 L890.9 426.2 L899.3 422.6 L907.4 418.7 L915.0 414.6 L922.2 410.3 L928.9 405.8 L935.1 401.2 L940.8 396.3 L945.9 391.4 L950.5 386.3 L954.6 381.1 L958.1 375.7 L961.0 370.3 L963.3 364.9 L965.1 359.3 L966.2 353.8 L966.8 348.2 L966.7 342.6 L966.0 337.0" fill="none" stroke="#6b4f14" stroke-width="0.85" opacity="0.78" stroke-linecap="round" stroke-linejoin="round"/>
<ellipse cx="670" cy="363.5" rx="5.8" ry="3.3" fill="#D9A441" stroke="#7a5a1c" stroke-width=".8"/>
<ellipse cx="850" cy="387.5" rx="5.8" ry="3.3" fill="#D9A441" stroke="#7a5a1c" stroke-width=".8"/>
<ellipse cx="760" cy="378" rx="34" ry="16" fill="#C99839" opacity=".25" filter="url(#blur2)"/>
<path d="M732.8 300 L732.8 373 A27.3 15.5 0 0 0 787.4 373 L787.4 300 Z" fill="url(#gCyl)" />
<path d="M732.8 308 L732.8 373 A27.3 15.5 0 0 0 787.4 373 L787.4 308" fill="none" stroke="#6b4f14" stroke-width="0.85" opacity="0.78" stroke-linecap="round" stroke-linejoin="round"/>
<path d="M733 378 A28 14 0 0 0 787 378" fill="none" stroke="#6b4f14" stroke-width="0.75" opacity="0.6799999999999999" stroke-linecap="round" stroke-linejoin="round"/>
<path d="M826.0 200.0 L827.6 183.4 L838.5 187.0 L845.8 190.7 L849.4 195.0 L850.2 198.5 L849.4 202.5 L845.0 209.0 L836.0 215.0 L834.8 217.0 L826.0 222.0 Z" fill="#F3B94D" />
<path d="M826.0 222.0 L834.8 217.0 L836.0 215.0 L845.0 209.0 L849.4 202.5 L850.2 198.5 L850.2 224.0 L846.5 233.8 L838.0 239.5 L828.8 243.5 L826.4 244.0 L815.0 244.0 Z" fill="#DDA743" />
<path d="M846.5 206 L850.2 198.5 L850.2 224 L846.5 233.8 Z" fill="#EAB34A" opacity=".7"/>
<path d="M834.8 217 Q845 211 849.6 201.5" fill="none" stroke="#6b4f14" stroke-width="0.85" opacity="0.8300000000000001" stroke-linecap="round" stroke-linejoin="round"/>
<path d="M826.4 232 L834.8 232 L834.8 244 L826.4 246.5 Z" fill="#E9B24A"/>
<path d="M826.4 235 L826.4 246 M830.7 235 L830.7 245" fill="none" stroke="#6b4f14" stroke-width="0.75" opacity="0.6799999999999999" stroke-linecap="round" stroke-linejoin="round"/>
<path d="M652.8 228.1 L653.0 228.5 L653.2 229.0 L653.5 229.4 L653.7 229.8 L654.0 230.2 L654.2 230.6 L654.5 231.0 L654.8 231.4 L655.0 231.9 L655.3 232.3 L655.6 232.7 L655.9 233.1 L656.3 233.5 L656.6 233.9 L656.9 234.3 L657.2 234.7 L657.6 235.1 L657.9 235.5 L658.3 235.9 L658.6 236.3 L659.0 236.7 L659.4 237.1 L659.8 237.5 L660.2 237.9 L660.6 238.3 L661.0 238.7 L661.4 239.1 L661.8 239.5 L662.2 239.9 L662.7 240.3 L663.1 240.7 L663.5 241.1 L664.0 241.5 L664.5 241.8 L664.9 242.2 L665.4 242.6 L665.9 243.0 L666.4 243.4 L666.9 243.7 L667.4 244.1 L667.9 244.5 L668.4 244.9 L668.9 245.2 L669.4 245.6 L669.9 246.0 L670.5 246.3 L671.0 246.7 L671.6 247.1 L672.1 247.4 L672.7 247.8 L673.3 248.1 L673.8 248.5 L674.4 248.8 L675.0 249.2 L675.6 249.5 L676.2 249.9 L676.8 250.2 L677.4 250.6 L678.0 250.9 L678.6 251.2 L679.3 251.6 L679.9 251.9 L680.5 252.2 L681.2 252.6 L681.8 252.9 L682.5 253.2 L683.1 253.5 L683.8 253.9 L684.5 254.2 L685.1 254.5 L685.8 254.8 L686.5 255.1 L687.2 255.4 L687.9 255.7 L688.6 256.0 L689.3 256.3 L690.0 256.6 L690.7 256.9 L691.4 257.2 L692.2 257.5 L692.9 257.8 L693.6 258.1 L694.4 258.3 L695.1 258.6 L695.9 258.9 L696.6 259.2 L697.4 259.4 L698.1 259.7 L698.9 260.0 L699.7 260.2 L700.4 260.5 L701.2 260.8 L702.0 261.0 L702.8 261.3 L703.6 261.5 L704.4 261.8 L705.1 262.0 L705.9 262.2 L706.7 262.5 L707.6 262.7 L708.4 262.9 L709.2 263.2 L710.0 263.4 L710.8 263.6 L711.6 263.8 L712.5 264.0 L713.3 264.3 L714.1 264.5 L715.0 264.7 L715.8 264.9 L716.6 265.1 L717.5 265.3 L718.3 265.5 L719.2 265.6 L720.0 265.8 L720.9 266.0 L721.8 266.2 L722.6 266.4 L723.5 266.5 L724.4 266.7 L725.2 266.9 L726.1 267.0 L727.0 267.2 L727.8 267.4 L728.7 267.5 L729.6 267.7 L730.5 267.8 L731.4 268.0 L732.2 268.1 L733.1 268.2 L734.0 268.4 L734.9 268.5 L735.8 268.6 L736.7 268.8 L737.6 268.9 L738.5 269.0 L739.4 269.1 L740.3 269.2 L741.2 269.3 L742.1 269.4 L743.0 269.5 L743.9 269.6 L744.8 269.7 L745.7 269.8 L746.6 269.9 L747.5 270.0 L748.4 270.0 L749.3 270.1 L750.2 270.2 L751.1 270.3 L752.0 270.3 L752.9 270.4 L753.8 270.4 L754.8 270.5 L755.7 270.5 L756.6 270.6 L757.5 270.6 L758.4 270.7 L759.3 270.7 L760.2 270.7 L761.1 270.8 L762.0 270.8 L762.9 270.8 L763.8 270.8 L764.7 270.8 L765.7 270.9 L766.6 270.9 L767.5 270.9 L768.4 270.9 L769.3 270.9 L770.2 270.8 L771.1 270.8 L772.0 270.8 L772.9 270.8 L773.8 270.8 L774.7 270.8 L775.6 270.7 L776.5 270.7 L777.3 270.7 L778.2 270.6 L779.1 270.6 L780.0 270.5 L780.9 270.5 L781.8 270.4 L782.7 270.4 L783.5 270.3 L784.4 270.2 L785.3 270.2 L786.2 270.1 L787.0 270.0 L787.9 269.9 L788.8 269.9 L789.6 269.8 L790.5 269.7 L791.4 269.6 L792.2 269.5 L793.1 269.4 L793.9 269.3 L794.8 269.2 L795.6 269.1 L796.5 269.0 L797.3 268.8 L798.2 268.7 L799.0 268.6 L799.8 268.5 L800.6 268.3 L801.5 268.2 L802.3 268.1 L803.1 267.9 L803.9 267.8 L804.7 267.6 L805.6 267.5 L806.4 267.3 L807.2 267.2 L808.0 267.0 L808.8 266.8 L809.5 266.7 L810.3 266.5 L811.1 266.3 L811.9 266.2 L812.7 266.0 L813.4 265.8 L814.2 265.6 L815.0 265.4 L815.7 265.2 L816.5 265.0 L817.2 264.8 L818.0 264.6 L818.7 264.4 L819.4 264.2 L820.2 264.0 L820.9 263.8 L821.6 263.6 L822.3 263.3 L823.1 263.1 L823.8 262.9 L824.5 262.7 L825.2 262.4 L825.9 262.2 L826.5 261.9 L827.2 261.7 L827.9 261.5 L828.6 261.2 L829.3 261.0 L829.9 260.7 L830.6 260.4 L831.2 260.2 L831.9 259.9 L832.5 259.7 L833.1 259.4 L833.8 259.1 L834.4 258.8 L835.0 258.6 L834.8 296.1 L834.1 296.4 L833.5 296.7 L832.9 296.9 L832.2 297.2 L831.6 297.4 L830.9 297.7 L830.3 298.0 L829.6 298.2 L829.0 298.5 L828.3 298.7 L827.6 299.0 L826.9 299.2 L826.3 299.4 L825.6 299.7 L824.9 299.9 L824.2 300.1 L823.5 300.4 L822.8 300.6 L822.1 300.8 L821.3 301.0 L820.6 301.2 L819.9 301.4 L819.1 301.6 L818.4 301.8 L817.7 302.1 L816.9 302.2 L816.2 302.4 L815.4 302.6 L814.7 302.8 L813.9 303.0 L813.1 303.2 L812.4 303.4 L811.6 303.5 L810.8 303.7 L810.0 303.9 L809.2 304.1 L808.4 304.2 L807.6 304.4 L806.8 304.5 L806.0 304.7 L805.2 304.8 L804.4 305.0 L803.6 305.1 L802.8 305.3 L802.0 305.4 L801.1 305.5 L800.3 305.7 L799.5 305.8 L798.7 305.9 L797.8 306.0 L797.0 306.1 L796.1 306.2 L795.3 306.4 L794.4 306.5 L793.6 306.6 L792.7 306.7 L791.9 306.7 L791.0 306.8 L790.2 306.9 L789.3 307.0 L788.4 307.1 L787.6 307.2 L786.7 307.2 L785.8 307.3 L785.0 307.4 L784.1 307.4 L783.2 307.5 L782.3 307.5 L781.4 307.6 L780.6 307.6 L779.7 307.7 L778.8 307.7 L777.9 307.8 L777.0 307.8 L776.1 307.8 L775.2 307.9 L774.3 307.9 L773.4 307.9 L772.5 307.9 L771.6 307.9 L770.7 307.9 L769.8 307.9 L768.9 307.9 L768.0 307.9 L767.1 307.9 L766.2 307.9 L765.3 307.9 L764.4 307.9 L763.5 307.9 L762.6 307.9 L761.7 307.8 L760.8 307.8 L759.9 307.8 L759.0 307.7 L758.0 307.7 L757.1 307.6 L756.2 307.6 L755.3 307.5 L754.4 307.5 L753.5 307.4 L752.6 307.4 L751.7 307.3 L750.8 307.2 L749.9 307.1 L749.0 307.1 L748.1 307.0 L747.2 306.9 L746.2 306.8 L745.3 306.7 L744.4 306.6 L743.5 306.5 L742.6 306.4 L741.7 306.3 L740.8 306.2 L739.9 306.1 L739.0 306.0 L738.1 305.9 L737.3 305.7 L736.4 305.6 L735.5 305.5 L734.6 305.4 L733.7 305.2 L732.8 305.1 L731.9 304.9 L731.0 304.8 L730.1 304.6 L729.3 304.5 L728.4 304.3 L727.5 304.2 L726.6 304.0 L725.8 303.8 L724.9 303.7 L724.0 303.5 L723.2 303.3 L722.3 303.1 L721.4 303.0 L720.6 302.8 L719.7 302.6 L718.9 302.4 L718.0 302.2 L717.2 302.0 L716.3 301.8 L715.5 301.6 L714.7 301.4 L713.8 301.2 L713.0 300.9 L712.2 300.7 L711.3 300.5 L710.5 300.3 L709.7 300.1 L708.9 299.8 L708.1 299.6 L707.3 299.4 L706.5 299.1 L705.7 298.9 L704.9 298.6 L704.1 298.4 L703.3 298.1 L702.5 297.9 L701.7 297.6 L700.9 297.4 L700.2 297.1 L699.4 296.8 L698.6 296.6 L697.9 296.3 L697.1 296.0 L696.3 295.8 L695.6 295.5 L694.9 295.2 L694.1 294.9 L693.4 294.6 L692.6 294.3 L691.9 294.0 L691.2 293.7 L690.5 293.5 L689.8 293.2 L689.1 292.9 L688.4 292.5 L687.7 292.2 L687.0 291.9 L686.3 291.6 L685.6 291.3 L684.9 291.0 L684.2 290.7 L683.6 290.3 L682.9 290.0 L682.3 289.7 L681.6 289.4 L681.0 289.0 L680.3 288.7 L679.7 288.4 L679.1 288.0 L678.4 287.7 L677.8 287.4 L677.2 287.0 L676.6 286.7 L676.0 286.3 L675.4 286.0 L674.8 285.6 L674.2 285.3 L673.7 284.9 L673.1 284.5 L672.5 284.2 L672.0 283.8 L671.4 283.5 L670.9 283.1 L670.3 282.7 L669.8 282.4 L669.3 282.0 L668.7 281.6 L668.2 281.2 L667.7 280.9 L667.2 280.5 L666.7 280.1 L666.2 279.7 L665.7 279.4 L665.3 279.0 L664.8 278.6 L664.3 278.2 L663.9 277.8 L663.4 277.4 L663.0 277.0 L662.5 276.6 L662.1 276.2 L661.7 275.9 L661.3 275.5 L660.9 275.1 L660.5 274.7 L660.1 274.3 L659.7 273.9 L659.3 273.5 L658.9 273.1 L658.5 272.7 L658.2 272.2 L657.8 271.8 L657.5 271.4 L657.1 271.0 L656.8 270.6 L656.5 270.2 L656.2 269.8 L655.9 269.4 L655.6 269.0 L655.3 268.6 L655.0 268.1 L654.7 267.7 L654.4 267.3 L654.2 266.9 L653.9 266.5 L653.6 266.1 L653.4 265.7 L653.2 265.2 L652.9 264.8 L652.7 264.4 Z" fill="url(#gWeb)" />
<path d="M652.9 204.0 L652.8 228.1 L653.0 228.5 L653.2 229.0 L653.5 229.4 L653.7 229.8 L654.0 230.2 L654.2 230.6 L654.5 231.0 L654.8 231.4 L655.0 231.9 L655.3 232.3 L655.6 232.7 L655.9 233.1 L656.3 233.5 L656.6 233.9 L656.9 234.3 L657.2 234.7 L657.6 235.1 L657.9 235.5 L658.3 235.9 L658.6 236.3 L659.0 236.7 L659.4 237.1 L659.8 237.5 L660.2 237.9 L660.6 238.3 L661.0 238.7 L661.4 239.1 L661.8 239.5 L662.2 239.9 L662.7 240.3 L663.1 240.7 L663.5 241.1 L664.0 241.5 L664.5 241.8 L664.9 242.2 L665.4 242.6 L665.9 243.0 L666.4 243.4 L666.9 243.7 L667.4 244.1 L667.9 244.5 L668.4 244.9 L668.9 245.2 L669.4 245.6 L669.9 246.0 L670.5 246.3 L671.0 246.7 L671.6 247.1 L672.1 247.4 L672.7 247.8 L673.3 248.1 L673.8 248.5 L674.4 248.8 L675.0 249.2 L675.6 249.5 L676.2 249.9 L676.8 250.2 L677.4 250.6 L678.0 250.9 L678.6 251.2 L679.3 251.6 L679.9 251.9 L680.5 252.2 L681.2 252.6 L681.8 252.9 L682.5 253.2 L683.1 253.5 L683.8 253.9 L684.5 254.2 L685.1 254.5 L685.8 254.8 L686.5 255.1 L687.2 255.4 L687.9 255.7 L688.6 256.0 L689.3 256.3 L690.0 256.6 L690.7 256.9 L691.4 257.2 L692.2 257.5 L692.9 257.8 L693.6 258.1 L694.4 258.3 L695.1 258.6 L695.9 258.9 L696.6 259.2 L697.4 259.4 L698.1 259.7 L698.9 260.0 L699.7 260.2 L700.4 260.5 L701.2 260.8 L702.0 261.0 L702.8 261.3 L703.6 261.5 L704.4 261.8 L705.1 262.0 L705.9 262.2 L706.7 262.5 L707.6 262.7 L708.4 262.9 L709.2 263.2 L710.0 263.4 L710.8 263.6 L711.6 263.8 L712.5 264.0 L713.3 264.3 L714.1 264.5 L715.0 264.7 L715.8 264.9 L716.6 265.1 L717.5 265.3 L718.3 265.5 L719.2 265.6 L720.0 265.8 L720.9 266.0 L721.8 266.2 L722.6 266.4 L723.5 266.5 L724.4 266.7 L725.2 266.9 L726.1 267.0 L727.0 267.2 L727.8 267.4 L728.7 267.5 L729.6 267.7 L730.5 267.8 L731.4 268.0 L732.2 268.1 L733.1 268.2 L734.0 268.4 L734.9 268.5 L735.8 268.6 L736.7 268.8 L737.6 268.9 L738.5 269.0 L739.4 269.1 L740.3 269.2 L741.2 269.3 L742.1 269.4 L743.0 269.5 L743.9 269.6 L744.8 269.7 L745.7 269.8 L746.6 269.9 L747.5 270.0 L748.4 270.0 L749.3 270.1 L750.2 270.2 L751.1 270.3 L752.0 270.3 L752.9 270.4 L753.8 270.4 L754.8 270.5 L755.7 270.5 L756.6 270.6 L757.5 270.6 L758.4 270.7 L759.3 270.7 L760.2 270.7 L761.1 270.8 L762.0 270.8 L762.9 270.8 L763.8 270.8 L764.7 270.8 L765.7 270.9 L766.6 270.9 L767.5 270.9 L768.4 270.9 L769.3 270.9 L770.2 270.8 L771.1 270.8 L772.0 270.8 L772.9 270.8 L773.8 270.8 L774.7 270.8 L775.6 270.7 L776.5 270.7 L777.3 270.7 L778.2 270.6 L779.1 270.6 L780.0 270.5 L780.9 270.5 L781.8 270.4 L782.7 270.4 L783.5 270.3 L784.4 270.2 L785.3 270.2 L786.2 270.1 L787.0 270.0 L787.9 269.9 L788.8 269.9 L789.6 269.8 L790.5 269.7 L791.4 269.6 L792.2 269.5 L793.1 269.4 L793.9 269.3 L794.8 269.2 L795.6 269.1 L796.5 269.0 L797.3 268.8 L798.2 268.7 L799.0 268.6 L799.8 268.5 L800.6 268.3 L801.5 268.2 L802.3 268.1 L803.1 267.9 L803.9 267.8 L804.7 267.6 L805.6 267.5 L806.4 267.3 L807.2 267.2 L808.0 267.0 L808.8 266.8 L809.5 266.7 L810.3 266.5 L811.1 266.3 L811.9 266.2 L812.7 266.0 L813.4 265.8 L814.2 265.6 L815.0 265.4 L815.7 265.2 L816.5 265.0 L817.2 264.8 L818.0 264.6 L818.7 264.4 L819.4 264.2 L820.2 264.0 L820.9 263.8 L821.6 263.6 L822.3 263.3 L823.1 263.1 L823.8 262.9 L824.5 262.7 L825.2 262.4 L825.9 262.2 L826.5 261.9 L827.2 261.7 L827.9 261.5 L828.6 261.2 L829.3 261.0 L829.9 260.7 L830.6 260.4 L831.2 260.2 L831.9 259.9 L832.5 259.7 L833.1 259.4 L833.8 259.1 L834.4 258.8 L835.0 258.6 L810.5 243.3 L800.0 230.0 L700.0 200.0 Z" fill="#F3B94D" />
<path d="M672.7 247.8 L673.3 248.1 L673.8 248.5 L674.4 248.8 L675.0 249.2 L675.6 249.5 L676.2 249.9 L676.8 250.2 L677.4 250.6 L678.0 250.9 L678.6 251.2 L679.3 251.6 L679.9 251.9 L680.5 252.2 L681.2 252.6 L681.8 252.9 L682.5 253.2 L683.1 253.5 L683.8 253.9 L684.5 254.2 L685.1 254.5 L685.8 254.8 L686.5 255.1 L687.2 255.4 L687.9 255.7 L688.6 256.0 L689.3 256.3 L690.0 256.6 L690.7 256.9 L691.4 257.2 L692.2 257.5 L692.9 257.8 L693.6 258.1 L694.4 258.3 L695.1 258.6 L695.9 258.9 L696.6 259.2 L697.4 259.4 L698.1 259.7 L698.9 260.0 L699.7 260.2 L700.4 260.5 L701.2 260.8 L702.0 261.0 L702.8 261.3 L703.6 261.5 L704.4 261.8 L705.1 262.0 L705.9 262.2 L706.7 262.5 L707.6 262.7 L708.4 262.9 L709.2 263.2 L710.0 263.4 L710.8 263.6 L711.6 263.8 L712.5 264.0 L713.3 264.3 L714.1 264.5 L715.0 264.7 L715.8 264.9 L716.6 265.1 L717.5 265.3 L718.3 265.5 L719.2 265.6 L720.0 265.8 L720.9 266.0 L721.8 266.2 L722.6 266.4 L723.5 266.5 L724.4 266.7 L725.2 266.9 L726.1 267.0 L727.0 267.2 L727.8 267.4 L728.7 267.5 L729.6 267.7 L730.5 267.8 L731.4 268.0 L732.2 268.1 L733.1 268.2 L734.0 268.4 L734.9 268.5 L735.8 268.6 L736.7 268.8 L737.6 268.9 L738.5 269.0 L739.4 269.1 L740.3 269.2 L741.2 269.3 L742.1 269.4 L743.0 269.5 L743.9 269.6 L744.8 269.7 L745.7 269.8 L746.6 269.9 L747.5 270.0 L748.4 270.0 L749.3 270.1 L750.2 270.2 L751.1 270.3 L752.0 270.3 L752.9 270.4 L753.8 270.4 L754.8 270.5 L755.7 270.5 L756.6 270.6 L757.5 270.6 L758.4 270.7 L759.3 270.7 L760.2 270.7 L761.1 270.8 L762.0 270.8 L762.9 270.8 L763.8 270.8 L764.7 270.8 L765.7 270.9 L766.6 270.9 L767.5 270.9 L768.4 270.9 L769.3 270.9 L770.2 270.8 L771.1 270.8 L772.0 270.8 L772.9 270.8 L773.8 270.8 L774.7 270.8 L775.6 270.7 L776.5 270.7 L777.3 270.7 L778.2 270.6 L779.1 270.6 L780.0 270.5 L780.9 270.5 L781.8 270.4 L782.7 270.4 L783.5 270.3 L784.4 270.2 L785.3 270.2 L786.2 270.1 L787.0 270.0 L787.9 269.9 L788.8 269.9 L789.6 269.8 L790.5 269.7 L791.4 269.6 L792.2 269.5 L793.1 269.4 L793.9 269.3 L794.8 269.2 L795.6 269.1 L796.5 269.0 L797.3 268.8 L798.2 268.7 L799.0 268.6 L799.8 268.5 L800.6 268.3 L801.5 268.2 L802.3 268.1 L803.1 267.9 L803.9 267.8 L804.7 267.6 L805.6 267.5 L806.4 267.3 L807.2 267.2 L808.0 267.0 L808.8 266.8 L809.5 266.7 L810.3 266.5 L811.1 266.3 L811.9 266.2 L812.7 266.0 L813.4 265.8 L814.2 265.6 L815.0 265.4 L815.7 265.2 L816.5 265.0 L817.2 264.8 L818.0 264.6 L818.7 264.4 L819.4 264.2 L820.2 264.0 L820.9 263.8 L821.6 263.6 L822.3 263.3 L823.1 263.1 L823.8 262.9 L824.5 262.7 L825.2 262.4 L825.9 262.2 L826.5 261.9 L827.2 261.7 L827.9 261.5 L828.6 261.2 L829.3 261.0 L829.9 260.7 L830.6 260.4 L831.2 260.2 L831.9 259.9 L832.5 259.7 L833.1 259.4 L833.8 259.1 L834.4 258.8 L835.0 258.6 L835.0 261.2 L834.4 261.4 L833.8 261.7 L833.1 262.0 L832.5 262.3 L831.9 262.5 L831.2 262.8 L830.6 263.0 L829.9 263.3 L829.3 263.6 L828.6 263.8 L827.9 264.1 L827.2 264.3 L826.5 264.5 L825.9 264.8 L825.2 265.0 L824.5 265.3 L823.8 265.5 L823.1 265.7 L822.3 265.9 L821.6 266.2 L820.9 266.4 L820.2 266.6 L819.4 266.8 L818.7 267.0 L818.0 267.2 L817.2 267.4 L816.5 267.6 L815.7 267.8 L815.0 268.0 L814.2 268.2 L813.4 268.4 L812.7 268.6 L811.9 268.8 L811.1 268.9 L810.3 269.1 L809.5 269.3 L808.8 269.4 L808.0 269.6 L807.2 269.8 L806.4 269.9 L805.6 270.1 L804.7 270.2 L803.9 270.4 L803.1 270.5 L802.3 270.7 L801.5 270.8 L800.6 270.9 L799.8 271.1 L799.0 271.2 L798.2 271.3 L797.3 271.4 L796.5 271.6 L795.6 271.7 L794.8 271.8 L793.9 271.9 L793.1 272.0 L792.2 272.1 L791.4 272.2 L790.5 272.3 L789.6 272.4 L788.8 272.5 L787.9 272.5 L787.0 272.6 L786.2 272.7 L785.3 272.8 L784.4 272.8 L783.5 272.9 L782.7 273.0 L781.8 273.0 L780.9 273.1 L780.0 273.1 L779.1 273.2 L778.2 273.2 L777.3 273.3 L776.5 273.3 L775.6 273.3 L774.7 273.4 L773.8 273.4 L772.9 273.4 L772.0 273.4 L771.1 273.4 L770.2 273.4 L769.3 273.5 L768.4 273.5 L767.5 273.5 L766.6 273.5 L765.7 273.5 L764.7 273.4 L763.8 273.4 L762.9 273.4 L762.0 273.4 L761.1 273.4 L760.2 273.3 L759.3 273.3 L758.4 273.3 L757.5 273.2 L756.6 273.2 L755.7 273.1 L754.8 273.1 L753.8 273.0 L752.9 273.0 L752.0 272.9 L751.1 272.9 L750.2 272.8 L749.3 272.7 L748.4 272.6 L747.5 272.6 L746.6 272.5 L745.7 272.4 L744.8 272.3 L743.9 272.2 L743.0 272.1 L742.1 272.0 L741.2 271.9 L740.3 271.8 L739.4 271.7 L738.5 271.6 L737.6 271.5 L736.7 271.4 L735.8 271.2 L734.9 271.1 L734.0 271.0 L733.1 270.8 L732.2 270.7 L731.4 270.6 L730.5 270.4 L729.6 270.3 L728.7 270.1 L727.8 270.0 L727.0 269.8 L726.1 269.6 L725.2 269.5 L724.4 269.3 L723.5 269.1 L722.6 269.0 L721.8 268.8 L720.9 268.6 L720.0 268.4 L719.2 268.2 L718.3 268.1 L717.5 267.9 L716.6 267.7 L715.8 267.5 L715.0 267.3 L714.1 267.1 L713.3 266.9 L712.5 266.6 L711.6 266.4 L710.8 266.2 L710.0 266.0 L709.2 265.8 L708.4 265.5 L707.6 265.3 L706.7 265.1 L705.9 264.8 L705.1 264.6 L704.4 264.4 L703.6 264.1 L702.8 263.9 L702.0 263.6 L701.2 263.4 L700.4 263.1 L699.7 262.8 L698.9 262.6 L698.1 262.3 L697.4 262.0 L696.6 261.8 L695.9 261.5 L695.1 261.2 L694.4 260.9 L693.6 260.7 L692.9 260.4 L692.2 260.1 L691.4 259.8 L690.7 259.5 L690.0 259.2 L689.3 258.9 L688.6 258.6 L687.9 258.3 L687.2 258.0 L686.5 257.7 L685.8 257.4 L685.1 257.1 L684.5 256.8 L683.8 256.5 L683.1 256.1 L682.5 255.8 L681.8 255.5 L681.2 255.2 L680.5 254.8 L679.9 254.5 L679.3 254.2 L678.6 253.8 L678.0 253.5 L677.4 253.2 L676.8 252.8 L676.2 252.5 L675.6 252.1 L675.0 251.8 L674.4 251.4 L673.8 251.1 L673.3 250.7 L672.7 250.4 Z" fill="#E8B149"/>
<path d="M652.8 228.1 L653.0 228.5 L653.2 229.0 L653.5 229.4 L653.7 229.8 L654.0 230.2 L654.2 230.6 L654.5 231.0 L654.8 231.4 L655.0 231.9 L655.3 232.3 L655.6 232.7 L655.9 233.1 L656.3 233.5 L656.6 233.9 L656.9 234.3 L657.2 234.7 L657.6 235.1 L657.9 235.5 L658.3 235.9 L658.6 236.3 L659.0 236.7 L659.4 237.1 L659.8 237.5 L660.2 237.9 L660.6 238.3 L661.0 238.7 L661.4 239.1 L661.8 239.5 L662.2 239.9 L662.7 240.3 L663.1 240.7 L663.5 241.1 L664.0 241.5 L664.5 241.8 L664.9 242.2 L665.4 242.6 L665.9 243.0 L666.4 243.4 L666.9 243.7 L667.4 244.1 L667.9 244.5 L668.4 244.9 L668.9 245.2 L669.4 245.6 L669.9 246.0 L670.5 246.3 L671.0 246.7 L671.6 247.1 L672.1 247.4 L672.7 247.8 L673.3 248.1 L673.8 248.5 L674.4 248.8 L675.0 249.2 L675.6 249.5 L676.2 249.9 L676.8 250.2 L677.4 250.6 L678.0 250.9 L678.6 251.2 L679.3 251.6 L679.9 251.9 L680.5 252.2 L681.2 252.6 L681.8 252.9 L682.5 253.2 L683.1 253.5 L683.8 253.9 L684.5 254.2 L685.1 254.5 L685.8 254.8 L686.5 255.1 L687.2 255.4 L687.9 255.7 L688.6 256.0 L689.3 256.3 L690.0 256.6 L690.7 256.9 L691.4 257.2 L692.2 257.5 L692.9 257.8 L693.6 258.1 L694.4 258.3 L695.1 258.6 L695.9 258.9 L696.6 259.2 L697.4 259.4 L698.1 259.7 L698.9 260.0 L699.7 260.2 L700.4 260.5 L701.2 260.8 L702.0 261.0 L702.8 261.3 L703.6 261.5 L704.4 261.8 L705.1 262.0 L705.9 262.2 L706.7 262.5 L707.6 262.7 L708.4 262.9 L709.2 263.2 L710.0 263.4 L710.8 263.6 L711.6 263.8 L712.5 264.0 L713.3 264.3 L714.1 264.5 L715.0 264.7 L715.8 264.9 L716.6 265.1 L717.5 265.3 L718.3 265.5 L719.2 265.6 L720.0 265.8 L720.9 266.0 L721.8 266.2 L722.6 266.4 L723.5 266.5 L724.4 266.7 L725.2 266.9 L726.1 267.0 L727.0 267.2 L727.8 267.4 L728.7 267.5 L729.6 267.7 L730.5 267.8 L731.4 268.0 L732.2 268.1 L733.1 268.2 L734.0 268.4 L734.9 268.5 L735.8 268.6 L736.7 268.8 L737.6 268.9 L738.5 269.0 L739.4 269.1 L740.3 269.2 L741.2 269.3 L742.1 269.4 L743.0 269.5 L743.9 269.6 L744.8 269.7 L745.7 269.8 L746.6 269.9 L747.5 270.0 L748.4 270.0 L749.3 270.1 L750.2 270.2 L751.1 270.3 L752.0 270.3 L752.9 270.4 L753.8 270.4 L754.8 270.5 L755.7 270.5 L756.6 270.6 L757.5 270.6 L758.4 270.7 L759.3 270.7 L760.2 270.7 L761.1 270.8 L762.0 270.8 L762.9 270.8 L763.8 270.8 L764.7 270.8 L765.7 270.9 L766.6 270.9 L767.5 270.9 L768.4 270.9 L769.3 270.9 L770.2 270.8 L771.1 270.8 L772.0 270.8 L772.9 270.8 L773.8 270.8 L774.7 270.8 L775.6 270.7 L776.5 270.7 L777.3 270.7 L778.2 270.6 L779.1 270.6 L780.0 270.5 L780.9 270.5 L781.8 270.4 L782.7 270.4 L783.5 270.3 L784.4 270.2 L785.3 270.2 L786.2 270.1 L787.0 270.0 L787.9 269.9 L788.8 269.9 L789.6 269.8 L790.5 269.7 L791.4 269.6 L792.2 269.5 L793.1 269.4 L793.9 269.3 L794.8 269.2 L795.6 269.1 L796.5 269.0 L797.3 268.8 L798.2 268.7 L799.0 268.6 L799.8 268.5 L800.6 268.3 L801.5 268.2 L802.3 268.1 L803.1 267.9 L803.9 267.8 L804.7 267.6 L805.6 267.5 L806.4 267.3 L807.2 267.2 L808.0 267.0 L808.8 266.8 L809.5 266.7 L810.3 266.5 L811.1 266.3 L811.9 266.2 L812.7 266.0 L813.4 265.8 L814.2 265.6 L815.0 265.4 L815.7 265.2 L816.5 265.0 L817.2 264.8 L818.0 264.6 L818.7 264.4 L819.4 264.2 L820.2 264.0 L820.9 263.8 L821.6 263.6 L822.3 263.3 L823.1 263.1 L823.8 262.9 L824.5 262.7 L825.2 262.4 L825.9 262.2 L826.5 261.9 L827.2 261.7 L827.9 261.5 L828.6 261.2 L829.3 261.0 L829.9 260.7 L830.6 260.4 L831.2 260.2 L831.9 259.9 L832.5 259.7 L833.1 259.4 L833.8 259.1 L834.4 258.8 L835.0 258.6" fill="none" stroke="#6b4f14" stroke-width="0.9500000000000001" opacity="0.9299999999999999" stroke-linecap="round" stroke-linejoin="round"/>
<path d="M672.7 250.4 L673.3 250.7 L673.8 251.1 L674.4 251.4 L675.0 251.8 L675.6 252.1 L676.2 252.5 L676.8 252.8 L677.4 253.2 L678.0 253.5 L678.6 253.8 L679.3 254.2 L679.9 254.5 L680.5 254.8 L681.2 255.2 L681.8 255.5 L682.5 255.8 L683.1 256.1 L683.8 256.5 L684.5 256.8 L685.1 257.1 L685.8 257.4 L686.5 257.7 L687.2 258.0 L687.9 258.3 L688.6 258.6 L689.3 258.9 L690.0 259.2 L690.7 259.5 L691.4 259.8 L692.2 260.1 L692.9 260.4 L693.6 260.7 L694.4 260.9 L695.1 261.2 L695.9 261.5 L696.6 261.8 L697.4 262.0 L698.1 262.3 L698.9 262.6 L699.7 262.8 L700.4 263.1 L701.2 263.4 L702.0 263.6 L702.8 263.9 L703.6 264.1 L704.4 264.4 L705.1 264.6 L705.9 264.8 L706.7 265.1 L707.6 265.3 L708.4 265.5 L709.2 265.8 L710.0 266.0 L710.8 266.2 L711.6 266.4 L712.5 266.6 L713.3 266.9 L714.1 267.1 L715.0 267.3 L715.8 267.5 L716.6 267.7 L717.5 267.9 L718.3 268.1 L719.2 268.2 L720.0 268.4 L720.9 268.6 L721.8 268.8 L722.6 269.0 L723.5 269.1 L724.4 269.3 L725.2 269.5 L726.1 269.6 L727.0 269.8 L727.8 270.0 L728.7 270.1 L729.6 270.3 L730.5 270.4 L731.4 270.6 L732.2 270.7 L733.1 270.8 L734.0 271.0 L734.9 271.1 L735.8 271.2 L736.7 271.4 L737.6 271.5 L738.5 271.6 L739.4 271.7 L740.3 271.8 L741.2 271.9 L742.1 272.0 L743.0 272.1 L743.9 272.2 L744.8 272.3 L745.7 272.4 L746.6 272.5 L747.5 272.6 L748.4 272.6 L749.3 272.7 L750.2 272.8 L751.1 272.9 L752.0 272.9 L752.9 273.0 L753.8 273.0 L754.8 273.1 L755.7 273.1 L756.6 273.2 L757.5 273.2 L758.4 273.3 L759.3 273.3 L760.2 273.3 L761.1 273.4 L762.0 273.4 L762.9 273.4 L763.8 273.4 L764.7 273.4 L765.7 273.5 L766.6 273.5 L767.5 273.5 L768.4 273.5 L769.3 273.5 L770.2 273.4 L771.1 273.4 L772.0 273.4 L772.9 273.4 L773.8 273.4 L774.7 273.4 L775.6 273.3 L776.5 273.3 L777.3 273.3 L778.2 273.2 L779.1 273.2 L780.0 273.1 L780.9 273.1 L781.8 273.0 L782.7 273.0 L783.5 272.9 L784.4 272.8 L785.3 272.8 L786.2 272.7 L787.0 272.6 L787.9 272.5 L788.8 272.5 L789.6 272.4 L790.5 272.3 L791.4 272.2 L792.2 272.1 L793.1 272.0 L793.9 271.9 L794.8 271.8 L795.6 271.7 L796.5 271.6 L797.3 271.4 L798.2 271.3 L799.0 271.2 L799.8 271.1 L800.6 270.9 L801.5 270.8 L802.3 270.7 L803.1 270.5 L803.9 270.4 L804.7 270.2 L805.6 270.1 L806.4 269.9 L807.2 269.8 L808.0 269.6 L808.8 269.4 L809.5 269.3 L810.3 269.1 L811.1 268.9 L811.9 268.8 L812.7 268.6 L813.4 268.4 L814.2 268.2 L815.0 268.0 L815.7 267.8 L816.5 267.6 L817.2 267.4 L818.0 267.2 L818.7 267.0 L819.4 266.8 L820.2 266.6 L820.9 266.4 L821.6 266.2 L822.3 265.9 L823.1 265.7 L823.8 265.5 L824.5 265.3 L825.2 265.0 L825.9 264.8 L826.5 264.5 L827.2 264.3 L827.9 264.1 L828.6 263.8 L829.3 263.6 L829.9 263.3 L830.6 263.0 L831.2 262.8 L831.9 262.5 L832.5 262.3 L833.1 262.0 L833.8 261.7 L834.4 261.4 L835.0 261.2" fill="none" stroke="#6b4f14" stroke-width="0.65" opacity="0.5800000000000001" stroke-linecap="round" stroke-linejoin="round"/>
<path d="M652.7 264.4 L652.9 264.8 L653.2 265.2 L653.4 265.7 L653.6 266.1 L653.9 266.5 L654.2 266.9 L654.4 267.3 L654.7 267.7 L655.0 268.1 L655.3 268.6 L655.6 269.0 L655.9 269.4 L656.2 269.8 L656.5 270.2 L656.8 270.6 L657.1 271.0 L657.5 271.4 L657.8 271.8 L658.2 272.2 L658.5 272.7 L658.9 273.1 L659.3 273.5 L659.7 273.9 L660.1 274.3 L660.5 274.7 L660.9 275.1 L661.3 275.5 L661.7 275.9 L662.1 276.2 L662.5 276.6 L663.0 277.0 L663.4 277.4 L663.9 277.8 L664.3 278.2 L664.8 278.6 L665.3 279.0 L665.7 279.4 L666.2 279.7 L666.7 280.1 L667.2 280.5 L667.7 280.9 L668.2 281.2 L668.7 281.6 L669.3 282.0 L669.8 282.4 L670.3 282.7 L670.9 283.1 L671.4 283.5 L672.0 283.8 L672.5 284.2 L673.1 284.5 L673.7 284.9 L674.2 285.3 L674.8 285.6 L675.4 286.0 L676.0 286.3 L676.6 286.7 L677.2 287.0 L677.8 287.4 L678.4 287.7 L679.1 288.0 L679.7 288.4 L680.3 288.7 L681.0 289.0 L681.6 289.4 L682.3 289.7 L682.9 290.0 L683.6 290.3 L684.2 290.7 L684.9 291.0 L685.6 291.3 L686.3 291.6 L687.0 291.9 L687.7 292.2 L688.4 292.5 L689.1 292.9 L689.8 293.2 L690.5 293.5 L691.2 293.7 L691.9 294.0 L692.6 294.3 L693.4 294.6 L694.1 294.9 L694.9 295.2 L695.6 295.5 L696.3 295.8 L697.1 296.0 L697.9 296.3 L698.6 296.6 L699.4 296.8 L700.2 297.1 L700.9 297.4 L701.7 297.6 L702.5 297.9 L703.3 298.1 L704.1 298.4 L704.9 298.6 L705.7 298.9 L706.5 299.1 L707.3 299.4 L708.1 299.6 L708.9 299.8 L709.7 300.1 L710.5 300.3 L711.3 300.5 L712.2 300.7 L713.0 300.9 L713.8 301.2 L714.7 301.4 L715.5 301.6 L716.3 301.8 L717.2 302.0 L718.0 302.2 L718.9 302.4 L719.7 302.6 L720.6 302.8 L721.4 303.0 L722.3 303.1 L723.2 303.3 L724.0 303.5 L724.9 303.7 L725.8 303.8 L726.6 304.0 L727.5 304.2 L728.4 304.3 L729.3 304.5 L730.1 304.6 L731.0 304.8 L731.9 304.9 L732.8 305.1 L733.7 305.2 L734.6 305.4 L735.5 305.5 L736.4 305.6 L737.3 305.7 L738.1 305.9 L739.0 306.0 L739.9 306.1 L740.8 306.2 L741.7 306.3 L742.6 306.4 L743.5 306.5 L744.4 306.6 L745.3 306.7 L746.2 306.8 L747.2 306.9 L748.1 307.0 L749.0 307.1 L749.9 307.1 L750.8 307.2 L751.7 307.3 L752.6 307.4 L753.5 307.4 L754.4 307.5 L755.3 307.5 L756.2 307.6 L757.1 307.6 L758.0 307.7 L759.0 307.7 L759.9 307.8 L760.8 307.8 L761.7 307.8 L762.6 307.9 L763.5 307.9 L764.4 307.9 L765.3 307.9 L766.2 307.9 L767.1 307.9 L768.0 307.9 L768.9 307.9 L769.8 307.9 L770.7 307.9 L771.6 307.9 L772.5 307.9 L773.4 307.9 L774.3 307.9 L775.2 307.9 L776.1 307.8 L777.0 307.8 L777.9 307.8 L778.8 307.7 L779.7 307.7 L780.6 307.6 L781.4 307.6 L782.3 307.5 L783.2 307.5 L784.1 307.4 L785.0 307.4 L785.8 307.3 L786.7 307.2 L787.6 307.2 L788.4 307.1 L789.3 307.0 L790.2 306.9 L791.0 306.8 L791.9 306.7 L792.7 306.7 L793.6 306.6 L794.4 306.5 L795.3 306.4 L796.1 306.2 L797.0 306.1 L797.8 306.0 L798.7 305.9 L799.5 305.8 L800.3 305.7 L801.1 305.5 L802.0 305.4 L802.8 305.3 L803.6 305.1 L804.4 305.0 L805.2 304.8 L806.0 304.7 L806.8 304.5 L807.6 304.4 L808.4 304.2 L809.2 304.1 L810.0 303.9 L810.8 303.7 L811.6 303.5 L812.4 303.4 L813.1 303.2 L813.9 303.0 L814.7 302.8 L815.4 302.6 L816.2 302.4 L816.9 302.2 L817.7 302.1 L818.4 301.8 L819.1 301.6 L819.9 301.4 L820.6 301.2 L821.3 301.0 L822.1 300.8 L822.8 300.6 L823.5 300.4 L824.2 300.1 L824.9 299.9 L825.6 299.7 L826.3 299.4 L826.9 299.2 L827.6 299.0 L828.3 298.7 L829.0 298.5 L829.6 298.2 L830.3 298.0 L830.9 297.7 L831.6 297.4 L832.2 297.2 L832.9 296.9 L833.5 296.7 L834.1 296.4 L834.8 296.1" fill="none" stroke="#6b4f14" stroke-width="0.85" opacity="0.78" stroke-linecap="round" stroke-linejoin="round"/>
<path d="M654.2 268.7 L654.4 269.1 L654.7 269.5 L655.0 269.9 L655.3 270.4 L655.6 270.8 L655.9 271.2 L656.2 271.6 L656.5 272.0 L656.8 272.4 L657.1 272.8 L657.5 273.2 L657.8 273.6 L658.2 274.0 L658.5 274.5 L658.9 274.9 L659.3 275.3 L659.7 275.7 L660.1 276.1 L660.5 276.5 L660.9 276.9 L661.3 277.3 L661.7 277.7 L662.1 278.0 L662.5 278.4 L663.0 278.8 L663.4 279.2 L663.9 279.6 L664.3 280.0 L664.8 280.4 L665.3 280.8 L665.7 281.2 L666.2 281.5 L666.7 281.9 L667.2 282.3 L667.7 282.7 L668.2 283.0 L668.7 283.4 L669.3 283.8 L669.8 284.2 L670.3 284.5 L670.9 284.9 L671.4 285.3 L672.0 285.6 L672.5 286.0 L673.1 286.3 L673.7 286.7 L674.2 287.1 L674.8 287.4 L675.4 287.8 L676.0 288.1 L676.6 288.5 L677.2 288.8 L677.8 289.2 L678.4 289.5 L679.1 289.8 L679.7 290.2 L680.3 290.5 L681.0 290.8 L681.6 291.2 L682.3 291.5 L682.9 291.8 L683.6 292.1 L684.2 292.5 L684.9 292.8 L685.6 293.1 L686.3 293.4 L687.0 293.7 L687.7 294.0 L688.4 294.3 L689.1 294.7 L689.8 295.0 L690.5 295.3 L691.2 295.5 L691.9 295.8 L692.6 296.1 L693.4 296.4 L694.1 296.7 L694.9 297.0 L695.6 297.3 L696.3 297.6 L697.1 297.8 L697.9 298.1 L698.6 298.4 L699.4 298.6 L700.2 298.9 L700.9 299.2 L701.7 299.4 L702.5 299.7 L703.3 299.9 L704.1 300.2 L704.9 300.4 L705.7 300.7 L706.5 300.9 L707.3 301.2 L708.1 301.4 L708.9 301.6 L709.7 301.9 L710.5 302.1 L711.3 302.3 L712.2 302.5 L713.0 302.7 L713.8 303.0 L714.7 303.2 L715.5 303.4 L716.3 303.6 L717.2 303.8 L718.0 304.0 L718.9 304.2 L719.7 304.4 L720.6 304.6 L721.4 304.8 L722.3 304.9 L723.2 305.1 L724.0 305.3 L724.9 305.5 L725.8 305.6 L726.6 305.8 L727.5 306.0 L728.4 306.1 L729.3 306.3 L730.1 306.4 L731.0 306.6 L731.9 306.7 L732.8 306.9 L733.7 307.0 L734.6 307.2 L735.5 307.3 L736.4 307.4 L737.3 307.5 L738.1 307.7 L739.0 307.8 L739.9 307.9 L740.8 308.0 L741.7 308.1 L742.6 308.2 L743.5 308.3 L744.4 308.4 L745.3 308.5 L746.2 308.6 L747.2 308.7 L748.1 308.8 L749.0 308.9 L749.9 308.9 L750.8 309.0 L751.7 309.1 L752.6 309.2 L753.5 309.2 L754.4 309.3 L755.3 309.3 L756.2 309.4 L757.1 309.4 L758.0 309.5 L759.0 309.5 L759.9 309.6 L760.8 309.6 L761.7 309.6 L762.6 309.7 L763.5 309.7 L764.4 309.7 L765.3 309.7 L766.2 309.7 L767.1 309.7 L768.0 309.7 L768.9 309.7 L769.8 309.7 L770.7 309.7 L771.6 309.7 L772.5 309.7 L773.4 309.7 L774.3 309.7 L775.2 309.7 L776.1 309.6 L777.0 309.6 L777.9 309.6 L778.8 309.5 L779.7 309.5 L780.6 309.4 L781.4 309.4 L782.3 309.3 L783.2 309.3 L784.1 309.2 L785.0 309.2 L785.8 309.1 L786.7 309.0 L787.6 309.0 L788.4 308.9 L789.3 308.8 L790.2 308.7 L791.0 308.6 L791.9 308.5 L792.7 308.5 L793.6 308.4 L794.4 308.3 L795.3 308.2 L796.1 308.0 L797.0 307.9 L797.8 307.8 L798.7 307.7 L799.5 307.6 L800.3 307.5 L801.1 307.3 L802.0 307.2 L802.8 307.1 L803.6 306.9 L804.4 306.8 L805.2 306.6 L806.0 306.5 L806.8 306.3 L807.6 306.2 L808.4 306.0 L809.2 305.9 L810.0 305.7 L810.8 305.5 L811.6 305.3 L812.4 305.2 L813.1 305.0 L813.9 304.8 L814.7 304.6 L815.4 304.4 L816.2 304.2 L816.9 304.0 L817.7 303.9 L818.4 303.6 L819.1 303.4 L819.9 303.2 L820.6 303.0 L821.3 302.8 L822.1 302.6 L822.8 302.4 L823.5 302.2 L824.2 301.9 L824.9 301.7 L825.6 301.5 L826.3 301.2 L826.9 301.0 L827.6 300.8 L828.3 300.5 L829.0 300.3 L829.6 300.0 L830.3 299.8 L830.9 299.5 L831.6 299.2 L832.2 299.0 L832.9 298.7 L833.5 298.5 L834.1 298.2 L834.8 297.9" fill="none" stroke="#6b4f14" stroke-width="0.65" opacity="0.63" stroke-linecap="round" stroke-linejoin="round"/>
<path d="M835.0 258.6 L834.8 296.1" fill="none" stroke="#6b4f14" stroke-width="0.85" opacity="0.78" stroke-linecap="round" stroke-linejoin="round"/>
<path d="M832.6 256 L832.6 294" fill="none" stroke="#6b4f14" stroke-width="0.65" opacity="0.5800000000000001" stroke-linecap="round" stroke-linejoin="round"/>
<path d="M835.0 258.6 L810.5 243.3" fill="none" stroke="#6b4f14" stroke-width="0.85" opacity="0.78" stroke-linecap="round" stroke-linejoin="round"/>
<path d="M654.3 145.4 L654.2 145.8 L654.0 146.2 L653.9 146.6 L653.8 147.0 L653.6 147.4 L653.5 147.9 L653.4 148.3 L653.3 148.7 L653.2 149.1 L653.1 149.5 L653.1 149.9 L653.0 150.3 L652.9 150.8 L652.9 151.2 L652.8 151.6 L652.8 152.0 L652.8 152.4 L652.7 152.9 L652.7 153.3 L652.7 153.7 L652.7 154.1 L652.7 154.6 L652.7 155.0 L652.7 155.4 L652.8 155.8 L652.8 156.3 L652.9 156.7 L652.9 157.1 L653.0 157.5 L653.0 158.0 L653.1 158.4 L653.2 158.8 L653.3 159.2 L653.4 159.7 L653.5 160.1 L653.6 160.5 L653.7 160.9 L653.8 161.4 L654.0 161.8 L654.1 162.2 L654.2 162.7 L654.4 163.1 L654.6 163.5 L654.7 163.9 L654.9 164.4 L655.1 164.8 L655.3 165.2 L655.5 165.6 L655.7 166.1 L655.9 166.5 L656.1 166.9 L656.4 167.3 L656.6 167.8 L656.8 168.2 L657.1 168.6 L657.3 169.0 L657.6 169.5 L657.9 169.9 L658.2 170.3 L658.5 170.7 L658.7 171.1 L659.0 171.6 L659.4 172.0 L659.7 172.4 L660.0 172.8 L660.3 173.2 L660.6 173.6 L661.0 174.0 L661.3 174.5 L661.7 174.9 L662.1 175.3 L662.4 175.7 L662.8 176.1 L663.2 176.5 L663.6 176.9 L664.0 177.3 L664.4 177.7 L664.8 178.1 L665.2 178.5 L665.6 178.9 L666.1 179.3 L666.5 179.7 L666.9 180.1 L667.4 180.5 L667.8 180.9 L668.3 181.3 L668.8 181.7 L669.2 182.1 L669.7 182.5 L670.2 182.8 L670.7 183.2 L671.2 183.6 L671.7 184.0 L672.2 184.4 L672.7 184.8 L673.3 185.1 L673.8 185.5 L674.3 185.9 L674.9 186.2 L675.4 186.6 L676.0 187.0 L676.5 187.3 L677.1 187.7 L677.7 188.1 L678.3 188.4 L678.8 188.8 L679.4 189.1 L680.0 189.5 L680.6 189.8 L681.2 190.2 L681.8 190.5 L682.5 190.9 L683.1 191.2 L683.7 191.6 L684.3 191.9 L685.0 192.2 L685.6 192.6 L686.3 192.9 L686.9 193.2 L687.6 193.6 L688.2 193.9 L688.9 194.2 L689.6 194.5 L690.2 194.8 L690.9 195.2 L691.6 195.5 L692.3 195.8 L693.0 196.1 L693.7 196.4 L694.4 196.7 L695.1 197.0 L695.8 197.3 L696.6 197.6 L697.3 197.9 L698.0 198.2 L698.7 198.5 L699.5 198.7 L700.2 199.0 L700.9 199.3 L701.7 199.6 L702.4 199.8 L703.2 200.1 L704.0 200.4 L704.7 200.6 L705.5 200.9 L706.3 201.2 L707.0 201.4 L707.8 201.7 L708.6 201.9 L709.4 202.2 L710.2 202.4 L711.0 202.6 L711.8 202.9 L712.6 203.1 L713.4 203.4 L714.2 203.6 L715.0 203.8 L715.8 204.0 L716.6 204.2 L717.4 204.5 L718.2 204.7 L719.0 204.9 L719.9 205.1 L720.7 205.3 L721.5 205.5 L722.4 205.7 L723.2 205.9 L724.0 206.1 L724.9 206.3 L725.7 206.4 L726.6 206.6 L727.4 206.8 L728.3 207.0 L729.1 207.1 L730.0 207.3 L730.8 207.5 L731.7 207.6 L732.5 207.8 L733.4 208.0 L734.2 208.1 L735.1 208.2 L736.0 208.4 L736.8 208.5 L737.7 208.7 L738.6 208.8 L739.4 208.9 L740.3 209.1 L741.2 209.2 L742.1 209.3 L742.9 209.4 L743.8 209.5 L744.7 209.6 L745.6 209.7 L746.4 209.8 L747.3 209.9 L748.2 210.0 L749.1 210.1 L750.0 210.2 L750.8 210.3 L751.7 210.4 L752.6 210.5 L753.5 210.5 L754.4 210.6 L755.2 210.7 L756.1 210.7 L757.0 210.8 L757.9 210.8 L758.8 210.9 L759.7 210.9 L760.5 211.0 L761.4 211.0 L762.3 211.1 L763.2 211.1 L764.1 211.1 L764.9 211.2 L765.8 211.2 L766.7 211.2 L767.6 211.2 L768.4 211.2 L769.3 211.2 L770.2 211.2 L771.1 211.2 L771.9 211.2 L772.8 211.2 L773.7 211.2 L774.6 211.2 L775.4 211.2 L776.3 211.2 L777.2 211.1 L778.0 211.1 L778.9 211.1 L779.7 211.0 L780.6 211.0 L781.5 211.0 L782.3 210.9 L783.2 210.9 L784.0 210.8 L784.9 210.8 L785.7 210.7 L786.6 210.6 L787.4 210.6 L788.2 210.5 L789.1 210.4 L789.9 210.3 L790.8 210.3 L791.6 210.2 L792.4 210.1 L793.2 210.0 L794.1 209.9 L794.9 209.8 L795.7 209.7 L796.5 209.6 L797.3 209.5 L798.1 209.4 L798.9 209.2 L799.7 209.1 L800.5 209.0 L801.3 208.9 L802.1 208.7 L802.9 208.6 L803.7 208.5 L804.5 208.3 L805.3 208.2 L806.1 208.0 L806.8 207.9 L807.6 207.7 L808.4 207.6 L809.1 207.4 L809.9 207.2 L810.6 207.1 L811.4 206.9 L812.1 206.7 L812.9 206.5 L813.6 206.3 L814.3 206.2 L815.1 206.0 L815.8 205.8 L816.5 205.6 L817.2 205.4 L817.9 205.2 L818.7 205.0 L819.4 204.8 L820.1 204.6 L820.8 204.3 L821.4 204.1 L822.1 203.9 L822.8 203.7 L823.5 203.5 L824.2 203.2 L824.8 203.0 L825.5 202.8 L826.1 202.5 L826.8 202.3 L827.4 202.0 L828.1 201.8 L828.7 201.5 L829.3 201.3 L830.0 201.0 L830.6 200.8 L831.2 200.5 L831.8 200.2 L832.4 200.0 L833.0 199.7 L833.6 199.4 L834.2 199.1 L834.8 198.9 L834.6 236.2 L833.9 236.5 L833.3 236.8 L832.7 237.0 L832.0 237.3 L831.4 237.5 L830.7 237.8 L830.1 238.0 L829.4 238.3 L828.8 238.5 L828.1 238.8 L827.4 239.0 L826.7 239.3 L826.0 239.5 L825.4 239.7 L824.7 240.0 L824.0 240.2 L823.3 240.4 L822.5 240.6 L821.8 240.8 L821.1 241.1 L820.4 241.3 L819.7 241.5 L818.9 241.7 L818.2 241.9 L817.4 242.1 L816.7 242.3 L815.9 242.5 L815.2 242.6 L814.4 242.8 L813.7 243.0 L812.9 243.2 L812.1 243.4 L811.3 243.5 L810.6 243.7 L809.8 243.9 L809.0 244.0 L808.2 244.2 L807.4 244.3 L806.6 244.5 L805.8 244.6 L805.0 244.8 L804.2 244.9 L803.4 245.1 L802.5 245.2 L801.7 245.3 L800.9 245.5 L800.1 245.6 L799.2 245.7 L798.4 245.8 L797.6 245.9 L796.7 246.0 L795.9 246.2 L795.0 246.3 L794.2 246.4 L793.3 246.5 L792.5 246.5 L791.6 246.6 L790.8 246.7 L789.9 246.8 L789.0 246.9 L788.2 247.0 L787.3 247.0 L786.4 247.1 L785.6 247.2 L784.7 247.2 L783.8 247.3 L782.9 247.3 L782.1 247.4 L781.2 247.4 L780.3 247.5 L779.4 247.5 L778.5 247.5 L777.6 247.6 L776.7 247.6 L775.8 247.6 L775.0 247.7 L774.1 247.7 L773.2 247.7 L772.3 247.7 L771.4 247.7 L770.5 247.7 L769.6 247.7 L768.7 247.7 L767.8 247.7 L766.9 247.7 L766.0 247.7 L765.0 247.7 L764.1 247.6 L763.2 247.6 L762.3 247.6 L761.4 247.6 L760.5 247.5 L759.6 247.5 L758.7 247.4 L757.8 247.4 L756.9 247.3 L756.0 247.3 L755.1 247.2 L754.2 247.2 L753.2 247.1 L752.3 247.0 L751.4 247.0 L750.5 246.9 L749.6 246.8 L748.7 246.7 L747.8 246.6 L746.9 246.6 L746.0 246.5 L745.1 246.4 L744.2 246.3 L743.3 246.2 L742.4 246.1 L741.5 245.9 L740.6 245.8 L739.7 245.7 L738.8 245.6 L737.9 245.5 L737.0 245.3 L736.1 245.2 L735.2 245.1 L734.3 244.9 L733.4 244.8 L732.6 244.7 L731.7 244.5 L730.8 244.4 L729.9 244.2 L729.0 244.0 L728.2 243.9 L727.3 243.7 L726.4 243.5 L725.5 243.4 L724.7 243.2 L723.8 243.0 L722.9 242.8 L722.1 242.7 L721.2 242.5 L720.4 242.3 L719.5 242.1 L718.7 241.9 L717.8 241.7 L717.0 241.5 L716.1 241.3 L715.3 241.1 L714.4 240.9 L713.6 240.6 L712.8 240.4 L711.9 240.2 L711.1 240.0 L710.3 239.7 L709.5 239.5 L708.7 239.3 L707.9 239.0 L707.1 238.8 L706.2 238.6 L705.4 238.3 L704.7 238.1 L703.9 237.8 L703.1 237.6 L702.3 237.3 L701.5 237.0 L700.7 236.8 L700.0 236.5 L699.2 236.2 L698.4 236.0 L697.7 235.7 L696.9 235.4 L696.2 235.1 L695.4 234.9 L694.7 234.6 L693.9 234.3 L693.2 234.0 L692.5 233.7 L691.7 233.4 L691.0 233.1 L690.3 232.8 L689.6 232.5 L688.9 232.2 L688.2 231.9 L687.5 231.6 L686.8 231.3 L686.1 230.9 L685.4 230.6 L684.7 230.3 L684.1 230.0 L683.4 229.7 L682.8 229.3 L682.1 229.0 L681.4 228.7 L680.8 228.3 L680.2 228.0 L679.5 227.7 L678.9 227.3 L678.3 227.0 L677.7 226.6 L677.1 226.3 L676.4 225.9 L675.8 225.6 L675.3 225.2 L674.7 224.9 L674.1 224.5 L673.5 224.2 L672.9 223.8 L672.4 223.4 L671.8 223.1 L671.3 222.7 L670.7 222.3 L670.2 222.0 L669.7 221.6 L669.1 221.2 L668.6 220.9 L668.1 220.5 L667.6 220.1 L667.1 219.7 L666.6 219.3 L666.1 219.0 L665.6 218.6 L665.1 218.2 L664.7 217.8 L664.2 217.4 L663.8 217.0 L663.3 216.6 L662.9 216.2 L662.4 215.8 L662.0 215.5 L661.6 215.1 L661.2 214.7 L660.8 214.3 L660.4 213.9 L660.0 213.5 L659.6 213.1 L659.2 212.6 L658.8 212.2 L658.5 211.8 L658.1 211.4 L657.8 211.0 L657.4 210.6 L657.1 210.2 L656.8 209.8 L656.4 209.4 L656.1 209.0 L655.8 208.6 L655.5 208.1 L655.2 207.7 L654.9 207.3 L654.6 206.9 L654.4 206.5 L654.1 206.1 L653.9 205.6 L653.6 205.2 L653.4 204.8 L653.1 204.4 L652.9 204.0 Z" fill="url(#gWeb)" />
<path d="M799.7 172.7 L801.0 169.0 L826.4 147.3 L830.0 145.5 L845.8 136.4 L850.0 132.0 L850.2 134.0 L850.2 163.5 L846.0 170.7 L837.0 174.5 L828.8 176.8 L828.0 179.5 L833.6 195.8 L803.3 177.6 Z" fill="#E6AF48" />
<path d="M830.7 145.5 L845.8 136.4 L850 132 L850.2 134 L850.2 163.5 L846 170.7 L837 174.5 L830.7 176.5 Z" fill="#DDA743"/>
<path d="M846.6 136 L850.2 133 L850.2 163.5 L846.6 169.5 Z" fill="#EAB34A" opacity=".7"/>
<path d="M826.4 147.3 L830.7 145.3 L830.7 179 L826.4 181 Z" fill="#EFB74C"/>
<path d="M654.3 145.4 L705.6 147.3 L720.0 140.0 L731.8 130.4 L760.0 110.0 L787.4 105.2 L789.6 105.4 L792.4 105.6 L795.9 105.9 L799.7 106.2 L803.7 106.6 L807.7 107.1 L811.5 107.7 L814.9 108.5 L818.1 109.5 L821.2 110.6 L824.4 111.8 L827.4 113.1 L830.3 114.6 L833.1 116.0 L835.7 117.5 L838.0 119.0 L840.1 120.6 L842.1 122.4 L843.8 124.3 L845.4 126.2 L846.9 128.0 L848.1 129.6 L849.2 131.0 L850.0 132.0 L845.8 136.4 L830.0 145.5 L826.4 147.3 L801.0 169.0 L799.7 172.7 L803.3 177.6 L833.6 195.8 L834.8 198.9 L834.2 199.1 L833.6 199.4 L833.0 199.7 L832.4 200.0 L831.8 200.2 L831.2 200.5 L830.6 200.8 L830.0 201.0 L829.3 201.3 L828.7 201.5 L828.1 201.8 L827.4 202.0 L826.8 202.3 L826.1 202.5 L825.5 202.8 L824.8 203.0 L824.2 203.2 L823.5 203.5 L822.8 203.7 L822.1 203.9 L821.4 204.1 L820.8 204.3 L820.1 204.6 L819.4 204.8 L818.7 205.0 L817.9 205.2 L817.2 205.4 L816.5 205.6 L815.8 205.8 L815.1 206.0 L814.3 206.2 L813.6 206.3 L812.9 206.5 L812.1 206.7 L811.4 206.9 L810.6 207.1 L809.9 207.2 L809.1 207.4 L808.4 207.6 L807.6 207.7 L806.8 207.9 L806.1 208.0 L805.3 208.2 L804.5 208.3 L803.7 208.5 L802.9 208.6 L802.1 208.7 L801.3 208.9 L800.5 209.0 L799.7 209.1 L798.9 209.2 L798.1 209.4 L797.3 209.5 L796.5 209.6 L795.7 209.7 L794.9 209.8 L794.1 209.9 L793.2 210.0 L792.4 210.1 L791.6 210.2 L790.8 210.3 L789.9 210.3 L789.1 210.4 L788.2 210.5 L787.4 210.6 L786.6 210.6 L785.7 210.7 L784.9 210.8 L784.0 210.8 L783.2 210.9 L782.3 210.9 L781.5 211.0 L780.6 211.0 L779.7 211.0 L778.9 211.1 L778.0 211.1 L777.2 211.1 L776.3 211.2 L775.4 211.2 L774.6 211.2 L773.7 211.2 L772.8 211.2 L771.9 211.2 L771.1 211.2 L770.2 211.2 L769.3 211.2 L768.4 211.2 L767.6 211.2 L766.7 211.2 L765.8 211.2 L764.9 211.2 L764.1 211.1 L763.2 211.1 L762.3 211.1 L761.4 211.0 L760.5 211.0 L759.7 210.9 L758.8 210.9 L757.9 210.8 L757.0 210.8 L756.1 210.7 L755.2 210.7 L754.4 210.6 L753.5 210.5 L752.6 210.5 L751.7 210.4 L750.8 210.3 L750.0 210.2 L749.1 210.1 L748.2 210.0 L747.3 209.9 L746.4 209.8 L745.6 209.7 L744.7 209.6 L743.8 209.5 L742.9 209.4 L742.1 209.3 L741.2 209.2 L740.3 209.1 L739.4 208.9 L738.6 208.8 L737.7 208.7 L736.8 208.5 L736.0 208.4 L735.1 208.2 L734.2 208.1 L733.4 208.0 L732.5 207.8 L731.7 207.6 L730.8 207.5 L730.0 207.3 L729.1 207.1 L728.3 207.0 L727.4 206.8 L726.6 206.6 L725.7 206.4 L724.9 206.3 L724.0 206.1 L723.2 205.9 L722.4 205.7 L721.5 205.5 L720.7 205.3 L719.9 205.1 L719.0 204.9 L718.2 204.7 L717.4 204.5 L716.6 204.2 L715.8 204.0 L715.0 203.8 L714.2 203.6 L713.4 203.4 L712.6 203.1 L711.8 202.9 L711.0 202.6 L710.2 202.4 L709.4 202.2 L708.6 201.9 L707.8 201.7 L707.0 201.4 L706.3 201.2 L705.5 200.9 L704.7 200.6 L704.0 200.4 L703.2 200.1 L702.4 199.8 L701.7 199.6 L700.9 199.3 L700.2 199.0 L699.5 198.7 L698.7 198.5 L698.0 198.2 L697.3 197.9 L696.6 197.6 L695.8 197.3 L695.1 197.0 L694.4 196.7 L693.7 196.4 L693.0 196.1 L692.3 195.8 L691.6 195.5 L690.9 195.2 L690.2 194.8 L689.6 194.5 L688.9 194.2 L688.2 193.9 L687.6 193.6 L686.9 193.2 L686.3 192.9 L685.6 192.6 L685.0 192.2 L684.3 191.9 L683.7 191.6 L683.1 191.2 L682.5 190.9 L681.8 190.5 L681.2 190.2 L680.6 189.8 L680.0 189.5 L679.4 189.1 L678.8 188.8 L678.3 188.4 L677.7 188.1 L677.1 187.7 L676.5 187.3 L676.0 187.0 L675.4 186.6 L674.9 186.2 L674.3 185.9 L673.8 185.5 L673.3 185.1 L672.7 184.8 L672.2 184.4 L671.7 184.0 L671.2 183.6 L670.7 183.2 L670.2 182.8 L669.7 182.5 L669.2 182.1 L668.8 181.7 L668.3 181.3 L667.8 180.9 L667.4 180.5 L666.9 180.1 L666.5 179.7 L666.1 179.3 L665.6 178.9 L665.2 178.5 L664.8 178.1 L664.4 177.7 L664.0 177.3 L663.6 176.9 L663.2 176.5 L662.8 176.1 L662.4 175.7 L662.1 175.3 L661.7 174.9 L661.3 174.5 L661.0 174.0 L660.6 173.6 L660.3 173.2 L660.0 172.8 L659.7 172.4 L659.4 172.0 L659.0 171.6 L658.7 171.1 L658.5 170.7 L658.2 170.3 L657.9 169.9 L657.6 169.5 L657.3 169.0 L657.1 168.6 L656.8 168.2 L656.6 167.8 L656.4 167.3 L656.1 166.9 L655.9 166.5 L655.7 166.1 L655.5 165.6 L655.3 165.2 L655.1 164.8 L654.9 164.4 L654.7 163.9 L654.6 163.5 L654.4 163.1 L654.2 162.7 L654.1 162.2 L654.0 161.8 L653.8 161.4 L653.7 160.9 L653.6 160.5 L653.5 160.1 L653.4 159.7 L653.3 159.2 L653.2 158.8 L653.1 158.4 L653.0 158.0 L653.0 157.5 L652.9 157.1 L652.9 156.7 L652.8 156.3 L652.8 155.8 L652.7 155.4 L652.7 155.0 L652.7 154.6 L652.7 154.1 L652.7 153.7 L652.7 153.3 L652.7 152.9 L652.8 152.4 L652.8 152.0 L652.8 151.6 L652.9 151.2 L652.9 150.8 L653.0 150.3 L653.1 149.9 L653.1 149.5 L653.2 149.1 L653.3 148.7 L653.4 148.3 L653.5 147.9 L653.6 147.4 L653.8 147.0 L653.9 146.6 L654.0 146.2 L654.2 145.8 L654.3 145.4 Z" fill="#F3B94D" />
<path d="M665.6 178.9 L666.1 179.3 L666.5 179.7 L666.9 180.1 L667.4 180.5 L667.8 180.9 L668.3 181.3 L668.8 181.7 L669.2 182.1 L669.7 182.5 L670.2 182.8 L670.7 183.2 L671.2 183.6 L671.7 184.0 L672.2 184.4 L672.7 184.8 L673.3 185.1 L673.8 185.5 L674.3 185.9 L674.9 186.2 L675.4 186.6 L676.0 187.0 L676.5 187.3 L677.1 187.7 L677.7 188.1 L678.3 188.4 L678.8 188.8 L679.4 189.1 L680.0 189.5 L680.6 189.8 L681.2 190.2 L681.8 190.5 L682.5 190.9 L683.1 191.2 L683.7 191.6 L684.3 191.9 L685.0 192.2 L685.6 192.6 L686.3 192.9 L686.9 193.2 L687.6 193.6 L688.2 193.9 L688.9 194.2 L689.6 194.5 L690.2 194.8 L690.9 195.2 L691.6 195.5 L692.3 195.8 L693.0 196.1 L693.7 196.4 L694.4 196.7 L695.1 197.0 L695.8 197.3 L696.6 197.6 L697.3 197.9 L698.0 198.2 L698.7 198.5 L699.5 198.7 L700.2 199.0 L700.9 199.3 L701.7 199.6 L702.4 199.8 L703.2 200.1 L704.0 200.4 L704.7 200.6 L705.5 200.9 L706.3 201.2 L707.0 201.4 L707.8 201.7 L708.6 201.9 L709.4 202.2 L710.2 202.4 L711.0 202.6 L711.8 202.9 L712.6 203.1 L713.4 203.4 L714.2 203.6 L715.0 203.8 L715.8 204.0 L716.6 204.2 L717.4 204.5 L718.2 204.7 L719.0 204.9 L719.9 205.1 L720.7 205.3 L721.5 205.5 L722.4 205.7 L723.2 205.9 L724.0 206.1 L724.9 206.3 L725.7 206.4 L726.6 206.6 L727.4 206.8 L728.3 207.0 L729.1 207.1 L730.0 207.3 L730.8 207.5 L731.7 207.6 L732.5 207.8 L733.4 208.0 L734.2 208.1 L735.1 208.2 L736.0 208.4 L736.8 208.5 L737.7 208.7 L738.6 208.8 L739.4 208.9 L740.3 209.1 L741.2 209.2 L742.1 209.3 L742.9 209.4 L743.8 209.5 L744.7 209.6 L745.6 209.7 L746.4 209.8 L747.3 209.9 L748.2 210.0 L749.1 210.1 L750.0 210.2 L750.8 210.3 L751.7 210.4 L752.6 210.5 L753.5 210.5 L754.4 210.6 L755.2 210.7 L756.1 210.7 L757.0 210.8 L757.9 210.8 L758.8 210.9 L759.7 210.9 L760.5 211.0 L761.4 211.0 L762.3 211.1 L763.2 211.1 L764.1 211.1 L764.9 211.2 L765.8 211.2 L766.7 211.2 L767.6 211.2 L768.4 211.2 L769.3 211.2 L770.2 211.2 L771.1 211.2 L771.9 211.2 L772.8 211.2 L773.7 211.2 L774.6 211.2 L775.4 211.2 L776.3 211.2 L777.2 211.1 L778.0 211.1 L778.9 211.1 L779.7 211.0 L780.6 211.0 L781.5 211.0 L782.3 210.9 L783.2 210.9 L784.0 210.8 L784.9 210.8 L785.7 210.7 L786.6 210.6 L787.4 210.6 L788.2 210.5 L789.1 210.4 L789.9 210.3 L790.8 210.3 L791.6 210.2 L792.4 210.1 L793.2 210.0 L794.1 209.9 L794.9 209.8 L795.7 209.7 L796.5 209.6 L797.3 209.5 L798.1 209.4 L798.9 209.2 L799.7 209.1 L800.5 209.0 L801.3 208.9 L802.1 208.7 L802.9 208.6 L803.7 208.5 L804.5 208.3 L805.3 208.2 L806.1 208.0 L806.8 207.9 L807.6 207.7 L808.4 207.6 L809.1 207.4 L809.9 207.2 L810.6 207.1 L811.4 206.9 L812.1 206.7 L812.9 206.5 L813.6 206.3 L814.3 206.2 L815.1 206.0 L815.8 205.8 L816.5 205.6 L817.2 205.4 L817.9 205.2 L818.7 205.0 L819.4 204.8 L820.1 204.6 L820.8 204.3 L821.4 204.1 L822.1 203.9 L822.8 203.7 L823.5 203.5 L824.2 203.2 L824.8 203.0 L825.5 202.8 L826.1 202.5 L826.8 202.3 L827.4 202.0 L828.1 201.8 L828.7 201.5 L829.3 201.3 L830.0 201.0 L830.6 200.8 L831.2 200.5 L831.8 200.2 L832.4 200.0 L833.0 199.7 L833.6 199.4 L834.2 199.1 L834.8 198.9 L834.8 202.1 L834.2 202.3 L833.6 202.6 L833.0 202.9 L832.4 203.2 L831.8 203.4 L831.2 203.7 L830.6 204.0 L830.0 204.2 L829.3 204.5 L828.7 204.7 L828.1 205.0 L827.4 205.2 L826.8 205.5 L826.1 205.7 L825.5 206.0 L824.8 206.2 L824.2 206.4 L823.5 206.7 L822.8 206.9 L822.1 207.1 L821.4 207.3 L820.8 207.5 L820.1 207.8 L819.4 208.0 L818.7 208.2 L817.9 208.4 L817.2 208.6 L816.5 208.8 L815.8 209.0 L815.1 209.2 L814.3 209.4 L813.6 209.5 L812.9 209.7 L812.1 209.9 L811.4 210.1 L810.6 210.3 L809.9 210.4 L809.1 210.6 L808.4 210.8 L807.6 210.9 L806.8 211.1 L806.1 211.2 L805.3 211.4 L804.5 211.5 L803.7 211.7 L802.9 211.8 L802.1 211.9 L801.3 212.1 L800.5 212.2 L799.7 212.3 L798.9 212.4 L798.1 212.6 L797.3 212.7 L796.5 212.8 L795.7 212.9 L794.9 213.0 L794.1 213.1 L793.2 213.2 L792.4 213.3 L791.6 213.4 L790.8 213.5 L789.9 213.5 L789.1 213.6 L788.2 213.7 L787.4 213.8 L786.6 213.8 L785.7 213.9 L784.9 214.0 L784.0 214.0 L783.2 214.1 L782.3 214.1 L781.5 214.2 L780.6 214.2 L779.7 214.2 L778.9 214.3 L778.0 214.3 L777.2 214.3 L776.3 214.4 L775.4 214.4 L774.6 214.4 L773.7 214.4 L772.8 214.4 L771.9 214.4 L771.1 214.4 L770.2 214.4 L769.3 214.4 L768.4 214.4 L767.6 214.4 L766.7 214.4 L765.8 214.4 L764.9 214.4 L764.1 214.3 L763.2 214.3 L762.3 214.3 L761.4 214.2 L760.5 214.2 L759.7 214.1 L758.8 214.1 L757.9 214.0 L757.0 214.0 L756.1 213.9 L755.2 213.9 L754.4 213.8 L753.5 213.7 L752.6 213.7 L751.7 213.6 L750.8 213.5 L750.0 213.4 L749.1 213.3 L748.2 213.2 L747.3 213.1 L746.4 213.0 L745.6 212.9 L744.7 212.8 L743.8 212.7 L742.9 212.6 L742.1 212.5 L741.2 212.4 L740.3 212.3 L739.4 212.1 L738.6 212.0 L737.7 211.9 L736.8 211.7 L736.0 211.6 L735.1 211.4 L734.2 211.3 L733.4 211.2 L732.5 211.0 L731.7 210.8 L730.8 210.7 L730.0 210.5 L729.1 210.3 L728.3 210.2 L727.4 210.0 L726.6 209.8 L725.7 209.6 L724.9 209.5 L724.0 209.3 L723.2 209.1 L722.4 208.9 L721.5 208.7 L720.7 208.5 L719.9 208.3 L719.0 208.1 L718.2 207.9 L717.4 207.7 L716.6 207.4 L715.8 207.2 L715.0 207.0 L714.2 206.8 L713.4 206.6 L712.6 206.3 L711.8 206.1 L711.0 205.8 L710.2 205.6 L709.4 205.4 L708.6 205.1 L707.8 204.9 L707.0 204.6 L706.3 204.4 L705.5 204.1 L704.7 203.8 L704.0 203.6 L703.2 203.3 L702.4 203.0 L701.7 202.8 L700.9 202.5 L700.2 202.2 L699.5 201.9 L698.7 201.7 L698.0 201.4 L697.3 201.1 L696.6 200.8 L695.8 200.5 L695.1 200.2 L694.4 199.9 L693.7 199.6 L693.0 199.3 L692.3 199.0 L691.6 198.7 L690.9 198.4 L690.2 198.0 L689.6 197.7 L688.9 197.4 L688.2 197.1 L687.6 196.8 L686.9 196.4 L686.3 196.1 L685.6 195.8 L685.0 195.4 L684.3 195.1 L683.7 194.8 L683.1 194.4 L682.5 194.1 L681.8 193.7 L681.2 193.4 L680.6 193.0 L680.0 192.7 L679.4 192.3 L678.8 192.0 L678.3 191.6 L677.7 191.3 L677.1 190.9 L676.5 190.5 L676.0 190.2 L675.4 189.8 L674.9 189.4 L674.3 189.1 L673.8 188.7 L673.3 188.3 L672.7 188.0 L672.2 187.6 L671.7 187.2 L671.2 186.8 L670.7 186.4 L670.2 186.0 L669.7 185.7 L669.2 185.3 L668.8 184.9 L668.3 184.5 L667.8 184.1 L667.4 183.7 L666.9 183.3 L666.5 182.9 L666.1 182.5 L665.6 182.1 Z" fill="#E8B149"/>
<path d="M654.3 145.4 L654.2 145.8 L654.0 146.2 L653.9 146.6 L653.8 147.0 L653.6 147.4 L653.5 147.9 L653.4 148.3 L653.3 148.7 L653.2 149.1 L653.1 149.5 L653.1 149.9 L653.0 150.3 L652.9 150.8 L652.9 151.2 L652.8 151.6 L652.8 152.0 L652.8 152.4 L652.7 152.9 L652.7 153.3 L652.7 153.7 L652.7 154.1 L652.7 154.6 L652.7 155.0 L652.7 155.4 L652.8 155.8 L652.8 156.3 L652.9 156.7 L652.9 157.1 L653.0 157.5 L653.0 158.0 L653.1 158.4 L653.2 158.8 L653.3 159.2 L653.4 159.7 L653.5 160.1 L653.6 160.5 L653.7 160.9 L653.8 161.4 L654.0 161.8 L654.1 162.2 L654.2 162.7 L654.4 163.1 L654.6 163.5 L654.7 163.9 L654.9 164.4 L655.1 164.8 L655.3 165.2 L655.5 165.6 L655.7 166.1 L655.9 166.5 L656.1 166.9 L656.4 167.3 L656.6 167.8 L656.8 168.2 L657.1 168.6 L657.3 169.0 L657.6 169.5 L657.9 169.9 L658.2 170.3 L658.5 170.7 L658.7 171.1 L659.0 171.6 L659.4 172.0 L659.7 172.4 L660.0 172.8 L660.3 173.2 L660.6 173.6 L661.0 174.0 L661.3 174.5 L661.7 174.9 L662.1 175.3 L662.4 175.7 L662.8 176.1 L663.2 176.5 L663.6 176.9 L664.0 177.3 L664.4 177.7 L664.8 178.1 L665.2 178.5 L665.6 178.9 L666.1 179.3 L666.5 179.7 L666.9 180.1 L667.4 180.5 L667.8 180.9 L668.3 181.3 L668.8 181.7 L669.2 182.1 L669.7 182.5 L670.2 182.8 L670.7 183.2 L671.2 183.6 L671.7 184.0 L672.2 184.4 L672.7 184.8 L673.3 185.1 L673.8 185.5 L674.3 185.9 L674.9 186.2 L675.4 186.6 L676.0 187.0 L676.5 187.3 L677.1 187.7 L677.7 188.1 L678.3 188.4 L678.8 188.8 L679.4 189.1 L680.0 189.5 L680.6 189.8 L681.2 190.2 L681.8 190.5 L682.5 190.9 L683.1 191.2 L683.7 191.6 L684.3 191.9 L685.0 192.2 L685.6 192.6 L686.3 192.9 L686.9 193.2 L687.6 193.6 L688.2 193.9 L688.9 194.2 L689.6 194.5 L690.2 194.8 L690.9 195.2 L691.6 195.5 L692.3 195.8 L693.0 196.1 L693.7 196.4 L694.4 196.7 L695.1 197.0 L695.8 197.3 L696.6 197.6 L697.3 197.9 L698.0 198.2 L698.7 198.5 L699.5 198.7 L700.2 199.0 L700.9 199.3 L701.7 199.6 L702.4 199.8 L703.2 200.1 L704.0 200.4 L704.7 200.6 L705.5 200.9 L706.3 201.2 L707.0 201.4 L707.8 201.7 L708.6 201.9 L709.4 202.2 L710.2 202.4 L711.0 202.6 L711.8 202.9 L712.6 203.1 L713.4 203.4 L714.2 203.6 L715.0 203.8 L715.8 204.0 L716.6 204.2 L717.4 204.5 L718.2 204.7 L719.0 204.9 L719.9 205.1 L720.7 205.3 L721.5 205.5 L722.4 205.7 L723.2 205.9 L724.0 206.1 L724.9 206.3 L725.7 206.4 L726.6 206.6 L727.4 206.8 L728.3 207.0 L729.1 207.1 L730.0 207.3 L730.8 207.5 L731.7 207.6 L732.5 207.8 L733.4 208.0 L734.2 208.1 L735.1 208.2 L736.0 208.4 L736.8 208.5 L737.7 208.7 L738.6 208.8 L739.4 208.9 L740.3 209.1 L741.2 209.2 L742.1 209.3 L742.9 209.4 L743.8 209.5 L744.7 209.6 L745.6 209.7 L746.4 209.8 L747.3 209.9 L748.2 210.0 L749.1 210.1 L750.0 210.2 L750.8 210.3 L751.7 210.4 L752.6 210.5 L753.5 210.5 L754.4 210.6 L755.2 210.7 L756.1 210.7 L757.0 210.8 L757.9 210.8 L758.8 210.9 L759.7 210.9 L760.5 211.0 L761.4 211.0 L762.3 211.1 L763.2 211.1 L764.1 211.1 L764.9 211.2 L765.8 211.2 L766.7 211.2 L767.6 211.2 L768.4 211.2 L769.3 211.2 L770.2 211.2 L771.1 211.2 L771.9 211.2 L772.8 211.2 L773.7 211.2 L774.6 211.2 L775.4 211.2 L776.3 211.2 L777.2 211.1 L778.0 211.1 L778.9 211.1 L779.7 211.0 L780.6 211.0 L781.5 211.0 L782.3 210.9 L783.2 210.9 L784.0 210.8 L784.9 210.8 L785.7 210.7 L786.6 210.6 L787.4 210.6 L788.2 210.5 L789.1 210.4 L789.9 210.3 L790.8 210.3 L791.6 210.2 L792.4 210.1 L793.2 210.0 L794.1 209.9 L794.9 209.8 L795.7 209.7 L796.5 209.6 L797.3 209.5 L798.1 209.4 L798.9 209.2 L799.7 209.1 L800.5 209.0 L801.3 208.9 L802.1 208.7 L802.9 208.6 L803.7 208.5 L804.5 208.3 L805.3 208.2 L806.1 208.0 L806.8 207.9 L807.6 207.7 L808.4 207.6 L809.1 207.4 L809.9 207.2 L810.6 207.1 L811.4 206.9 L812.1 206.7 L812.9 206.5 L813.6 206.3 L814.3 206.2 L815.1 206.0 L815.8 205.8 L816.5 205.6 L817.2 205.4 L817.9 205.2 L818.7 205.0 L819.4 204.8 L820.1 204.6 L820.8 204.3 L821.4 204.1 L822.1 203.9 L822.8 203.7 L823.5 203.5 L824.2 203.2 L824.8 203.0 L825.5 202.8 L826.1 202.5 L826.8 202.3 L827.4 202.0 L828.1 201.8 L828.7 201.5 L829.3 201.3 L830.0 201.0 L830.6 200.8 L831.2 200.5 L831.8 200.2 L832.4 200.0 L833.0 199.7 L833.6 199.4 L834.2 199.1 L834.8 198.9" fill="none" stroke="#6b4f14" stroke-width="0.9500000000000001" opacity="0.9299999999999999" stroke-linecap="round" stroke-linejoin="round"/>
<path d="M665.6 182.1 L666.1 182.5 L666.5 182.9 L666.9 183.3 L667.4 183.7 L667.8 184.1 L668.3 184.5 L668.8 184.9 L669.2 185.3 L669.7 185.7 L670.2 186.0 L670.7 186.4 L671.2 186.8 L671.7 187.2 L672.2 187.6 L672.7 188.0 L673.3 188.3 L673.8 188.7 L674.3 189.1 L674.9 189.4 L675.4 189.8 L676.0 190.2 L676.5 190.5 L677.1 190.9 L677.7 191.3 L678.3 191.6 L678.8 192.0 L679.4 192.3 L680.0 192.7 L680.6 193.0 L681.2 193.4 L681.8 193.7 L682.5 194.1 L683.1 194.4 L683.7 194.8 L684.3 195.1 L685.0 195.4 L685.6 195.8 L686.3 196.1 L686.9 196.4 L687.6 196.8 L688.2 197.1 L688.9 197.4 L689.6 197.7 L690.2 198.0 L690.9 198.4 L691.6 198.7 L692.3 199.0 L693.0 199.3 L693.7 199.6 L694.4 199.9 L695.1 200.2 L695.8 200.5 L696.6 200.8 L697.3 201.1 L698.0 201.4 L698.7 201.7 L699.5 201.9 L700.2 202.2 L700.9 202.5 L701.7 202.8 L702.4 203.0 L703.2 203.3 L704.0 203.6 L704.7 203.8 L705.5 204.1 L706.3 204.4 L707.0 204.6 L707.8 204.9 L708.6 205.1 L709.4 205.4 L710.2 205.6 L711.0 205.8 L711.8 206.1 L712.6 206.3 L713.4 206.6 L714.2 206.8 L715.0 207.0 L715.8 207.2 L716.6 207.4 L717.4 207.7 L718.2 207.9 L719.0 208.1 L719.9 208.3 L720.7 208.5 L721.5 208.7 L722.4 208.9 L723.2 209.1 L724.0 209.3 L724.9 209.5 L725.7 209.6 L726.6 209.8 L727.4 210.0 L728.3 210.2 L729.1 210.3 L730.0 210.5 L730.8 210.7 L731.7 210.8 L732.5 211.0 L733.4 211.2 L734.2 211.3 L735.1 211.4 L736.0 211.6 L736.8 211.7 L737.7 211.9 L738.6 212.0 L739.4 212.1 L740.3 212.3 L741.2 212.4 L742.1 212.5 L742.9 212.6 L743.8 212.7 L744.7 212.8 L745.6 212.9 L746.4 213.0 L747.3 213.1 L748.2 213.2 L749.1 213.3 L750.0 213.4 L750.8 213.5 L751.7 213.6 L752.6 213.7 L753.5 213.7 L754.4 213.8 L755.2 213.9 L756.1 213.9 L757.0 214.0 L757.9 214.0 L758.8 214.1 L759.7 214.1 L760.5 214.2 L761.4 214.2 L762.3 214.3 L763.2 214.3 L764.1 214.3 L764.9 214.4 L765.8 214.4 L766.7 214.4 L767.6 214.4 L768.4 214.4 L769.3 214.4 L770.2 214.4 L771.1 214.4 L771.9 214.4 L772.8 214.4 L773.7 214.4 L774.6 214.4 L775.4 214.4 L776.3 214.4 L777.2 214.3 L778.0 214.3 L778.9 214.3 L779.7 214.2 L780.6 214.2 L781.5 214.2 L782.3 214.1 L783.2 214.1 L784.0 214.0 L784.9 214.0 L785.7 213.9 L786.6 213.8 L787.4 213.8 L788.2 213.7 L789.1 213.6 L789.9 213.5 L790.8 213.5 L791.6 213.4 L792.4 213.3 L793.2 213.2 L794.1 213.1 L794.9 213.0 L795.7 212.9 L796.5 212.8 L797.3 212.7 L798.1 212.6 L798.9 212.4 L799.7 212.3 L800.5 212.2 L801.3 212.1 L802.1 211.9 L802.9 211.8 L803.7 211.7 L804.5 211.5 L805.3 211.4 L806.1 211.2 L806.8 211.1 L807.6 210.9 L808.4 210.8 L809.1 210.6 L809.9 210.4 L810.6 210.3 L811.4 210.1 L812.1 209.9 L812.9 209.7 L813.6 209.5 L814.3 209.4 L815.1 209.2 L815.8 209.0 L816.5 208.8 L817.2 208.6 L817.9 208.4 L818.7 208.2 L819.4 208.0 L820.1 207.8 L820.8 207.5 L821.4 207.3 L822.1 207.1 L822.8 206.9 L823.5 206.7 L824.2 206.4 L824.8 206.2 L825.5 206.0 L826.1 205.7 L826.8 205.5 L827.4 205.2 L828.1 205.0 L828.7 204.7 L829.3 204.5 L830.0 204.2 L830.6 204.0 L831.2 203.7 L831.8 203.4 L832.4 203.2 L833.0 202.9 L833.6 202.6 L834.2 202.3 L834.8 202.1" fill="none" stroke="#6b4f14" stroke-width="0.65" opacity="0.5800000000000001" stroke-linecap="round" stroke-linejoin="round"/>
<path d="M652.9 204.0 L653.1 204.4 L653.4 204.8 L653.6 205.2 L653.9 205.6 L654.1 206.1 L654.4 206.5 L654.6 206.9 L654.9 207.3 L655.2 207.7 L655.5 208.1 L655.8 208.6 L656.1 209.0 L656.4 209.4 L656.8 209.8 L657.1 210.2 L657.4 210.6 L657.8 211.0 L658.1 211.4 L658.5 211.8 L658.8 212.2 L659.2 212.6 L659.6 213.1 L660.0 213.5 L660.4 213.9 L660.8 214.3 L661.2 214.7 L661.6 215.1 L662.0 215.5 L662.4 215.8 L662.9 216.2 L663.3 216.6 L663.8 217.0 L664.2 217.4 L664.7 217.8 L665.1 218.2 L665.6 218.6 L666.1 219.0 L666.6 219.3 L667.1 219.7 L667.6 220.1 L668.1 220.5 L668.6 220.9 L669.1 221.2 L669.7 221.6 L670.2 222.0 L670.7 222.3 L671.3 222.7 L671.8 223.1 L672.4 223.4 L672.9 223.8 L673.5 224.2 L674.1 224.5 L674.7 224.9 L675.3 225.2 L675.8 225.6 L676.4 225.9 L677.1 226.3 L677.7 226.6 L678.3 227.0 L678.9 227.3 L679.5 227.7 L680.2 228.0 L680.8 228.3 L681.4 228.7 L682.1 229.0 L682.8 229.3 L683.4 229.7 L684.1 230.0 L684.7 230.3 L685.4 230.6 L686.1 230.9 L686.8 231.3 L687.5 231.6 L688.2 231.9 L688.9 232.2 L689.6 232.5 L690.3 232.8 L691.0 233.1 L691.7 233.4 L692.5 233.7 L693.2 234.0 L693.9 234.3 L694.7 234.6 L695.4 234.9 L696.2 235.1 L696.9 235.4 L697.7 235.7 L698.4 236.0 L699.2 236.2 L700.0 236.5 L700.7 236.8 L701.5 237.0 L702.3 237.3 L703.1 237.6 L703.9 237.8 L704.7 238.1 L705.4 238.3 L706.2 238.6 L707.1 238.8 L707.9 239.0 L708.7 239.3 L709.5 239.5 L710.3 239.7 L711.1 240.0 L711.9 240.2 L712.8 240.4 L713.6 240.6 L714.4 240.9 L715.3 241.1 L716.1 241.3 L717.0 241.5 L717.8 241.7 L718.7 241.9 L719.5 242.1 L720.4 242.3 L721.2 242.5 L722.1 242.7 L722.9 242.8 L723.8 243.0 L724.7 243.2 L725.5 243.4 L726.4 243.5 L727.3 243.7 L728.2 243.9 L729.0 244.0 L729.9 244.2 L730.8 244.4 L731.7 244.5 L732.6 244.7 L733.4 244.8 L734.3 244.9 L735.2 245.1 L736.1 245.2 L737.0 245.3 L737.9 245.5 L738.8 245.6 L739.7 245.7 L740.6 245.8 L741.5 245.9 L742.4 246.1 L743.3 246.2 L744.2 246.3 L745.1 246.4 L746.0 246.5 L746.9 246.6 L747.8 246.6 L748.7 246.7 L749.6 246.8 L750.5 246.9 L751.4 247.0 L752.3 247.0 L753.2 247.1 L754.2 247.2 L755.1 247.2 L756.0 247.3 L756.9 247.3 L757.8 247.4 L758.7 247.4 L759.6 247.5 L760.5 247.5 L761.4 247.6 L762.3 247.6 L763.2 247.6 L764.1 247.6 L765.0 247.7 L766.0 247.7 L766.9 247.7 L767.8 247.7 L768.7 247.7 L769.6 247.7 L770.5 247.7 L771.4 247.7 L772.3 247.7 L773.2 247.7 L774.1 247.7 L775.0 247.7 L775.8 247.6 L776.7 247.6 L777.6 247.6 L778.5 247.5 L779.4 247.5 L780.3 247.5 L781.2 247.4 L782.1 247.4 L782.9 247.3 L783.8 247.3 L784.7 247.2 L785.6 247.2 L786.4 247.1 L787.3 247.0 L788.2 247.0 L789.0 246.9 L789.9 246.8 L790.8 246.7 L791.6 246.6 L792.5 246.5 L793.3 246.5 L794.2 246.4 L795.0 246.3 L795.9 246.2 L796.7 246.0 L797.6 245.9 L798.4 245.8 L799.2 245.7 L800.1 245.6 L800.9 245.5 L801.7 245.3 L802.5 245.2 L803.4 245.1 L804.2 244.9 L805.0 244.8 L805.8 244.6 L806.6 244.5 L807.4 244.3 L808.2 244.2 L809.0 244.0 L809.8 243.9 L810.6 243.7 L811.3 243.5 L812.1 243.4 L812.9 243.2 L813.7 243.0 L814.4 242.8 L815.2 242.6 L815.9 242.5 L816.7 242.3 L817.4 242.1 L818.2 241.9 L818.9 241.7 L819.7 241.5 L820.4 241.3 L821.1 241.1 L821.8 240.8 L822.5 240.6 L823.3 240.4 L824.0 240.2 L824.7 240.0 L825.4 239.7 L826.0 239.5 L826.7 239.3 L827.4 239.0 L828.1 238.8 L828.8 238.5 L829.4 238.3 L830.1 238.0 L830.7 237.8 L831.4 237.5 L832.0 237.3 L832.7 237.0 L833.3 236.8 L833.9 236.5 L834.6 236.2" fill="none" stroke="#6b4f14" stroke-width="0.85" opacity="0.78" stroke-linecap="round" stroke-linejoin="round"/>
<path d="M834.8 198.9 L834.8 234.4" fill="none" stroke="#6b4f14" stroke-width="0.85" opacity="0.78" stroke-linecap="round" stroke-linejoin="round"/>
<path d="M832.8 199.5 L832.8 235" fill="none" stroke="#6b4f14" stroke-width="0.65" opacity="0.5800000000000001" stroke-linecap="round" stroke-linejoin="round"/>
<path d="M834.1 198.9 L833.6 195.8 L803.3 177.6 Q798.5 174 800 170.5 Q800.5 169.5 801 169 L826.4 147.3 Q838 142 845.8 136.4 Q849 134 850.6 131.5" fill="none" stroke="#6b4f14" stroke-width="0.9500000000000001" opacity="0.9299999999999999" stroke-linecap="round" stroke-linejoin="round"/>
<path d="M831 197.5 L804.5 181 Q800.5 178 801.5 174.5" fill="none" stroke="#6b4f14" stroke-width="0.65" opacity="0.63" stroke-linecap="round" stroke-linejoin="round"/>
<path d="M803 171.5 L828 150 Q838 145 847 138.5" fill="none" stroke="#6b4f14" stroke-width="0.65" opacity="0.63" stroke-linecap="round" stroke-linejoin="round"/>
<path d="M826.4 147.3 L826.4 180" fill="none" stroke="#6b4f14" stroke-width="0.75" opacity="0.73" stroke-linecap="round" stroke-linejoin="round"/>
<path d="M830.7 145.5 L830.7 177" fill="none" stroke="#6b4f14" stroke-width="0.75" opacity="0.73" stroke-linecap="round" stroke-linejoin="round"/>
<ellipse cx="760" cy="160" rx="38" ry="16" fill="#D9A340" opacity=".3" filter="url(#blur2)"/>
<path d="M732.8 80 L732.8 155.6 A27.3 14 0 0 0 787.4 155.6 L787.4 80 Q787.4 72 784.5 67 L777.6 58 L742.5 58 L736.2 67 Q732.8 72 732.8 80 Z" fill="url(#gCyl)" />
<path d="M732.8 155.6 A27.3 14 0 0 0 787.4 155.6 L787.4 106" fill="none" stroke="#6b4f14" stroke-width="0.85" opacity="0.78" stroke-linecap="round" stroke-linejoin="round"/>
<path d="M732.9 80 A27.3 12 0 0 0 787.3 80" fill="none" stroke="#6b4f14" stroke-width="0.85" opacity="0.78" stroke-linecap="round" stroke-linejoin="round"/>
<path d="M736.2 67 A24.2 11.5 0 0 0 784.5 67" fill="none" stroke="#6b4f14" stroke-width="0.85" opacity="0.78" stroke-linecap="round" stroke-linejoin="round"/>
<path d="M742.5 22 L742.5 62 A17.5 10 0 0 0 777.6 62 L777.6 22 A17.5 11 0 0 0 742.5 22 Z" fill="url(#gCyl)" />
<ellipse cx="760" cy="21" rx="17.5" ry="10.5" fill="#EDB54B"/>
<ellipse cx="760" cy="19" rx="14.6" ry="7" fill="#F3B94D"/>
<path d="M742.5 21 A17.5 10.5 0 0 0 777.6 21" fill="none" stroke="#6b4f14" stroke-width="0.9500000000000001" opacity="0.9299999999999999" stroke-linecap="round" stroke-linejoin="round"/>
<path d="M745.6 18 A14.6 7.5 0 0 0 774.6 18" fill="none" stroke="#6b4f14" stroke-width="0.9500000000000001" opacity="0.9299999999999999" stroke-linecap="round" stroke-linejoin="round"/>
<path d="M742.5 62 A17.5 10 0 0 0 777.6 62" fill="none" stroke="#6b4f14" stroke-width="0.85" opacity="0.78" stroke-linecap="round" stroke-linejoin="round"/>
<circle cx="759.8" cy="206.2" r="4.6" fill="#111"/><circle cx="759.8" cy="206.2" r="3.1" fill="#fff"/><circle cx="759.8" cy="206.2" r="1.5" fill="#111"/>
<g transform="translate(759.2 353.2)"><circle r="6.2" fill="#fff" stroke="#222" stroke-width="1"/><path d="M0 0 L0 -6.2 A6.2 6.2 0 0 0 -6.2 0 Z M0 0 L0 6.2 A6.2 6.2 0 0 0 6.2 0 Z" fill="#222"/><path d="M-8 0 H8 M0 -8 V8" stroke="#222" stroke-width=".8"/></g>
<path d="M1102.9 436.3 L1102.9 618" stroke="#FF0000" stroke-width="5.4"/><path d="M1095.8 616.9 L1110.5 616.9 L1103.1 630.8 Z" fill="#FF0000"/>
</svg>
<div id="dlg">
 <div style="position:absolute;left:0;top:28px;width:440px;height:1px;background:#d9d9d9"></div>
 <div style="position:absolute;left:384px;top:0;width:28px;height:28px;background:#0a8a0a"></div>
 <svg style="position:absolute;left:384px;top:0" width="28" height="28"><path d="M7 14.5 L12.2 19.5 L21.5 9.5" fill="none" stroke="#fff" stroke-width="2.6"/></svg>
 <svg style="position:absolute;left:419px;top:8px" width="14" height="14"><path d="M2 2 L12 12 M12 2 L2 12" fill="none" stroke="#c0272d" stroke-width="2.8"/></svg>
 <div style="position:absolute;left:0;top:54px;width:440px;height:1px;background:#d9d9d9"></div>
 <div style="position:absolute;left:0;top:53px;width:219px;height:2px;background:#1353b5"></div>
 <!-- selection box -->
 <div style="position:absolute;left:3px;top:62px;width:432px;height:42px;background:#dff0fa;border:1px solid #1b5fc0;border-radius:2px"></div>
 <svg style="position:absolute;left:417px;top:89px" width="9" height="9"><path d="M1.2 1.2 L7.8 7.8 M7.8 1.2 L1.2 7.8" fill="none" stroke="#555" stroke-width="1.2"/></svg>
 <div style="position:absolute;left:3px;top:111px;width:432px;height:24px;background:#fff;border:1px solid #d4d4d4;border-radius:2px"></div>
 <div style="position:absolute;left:5px;top:152px;width:10px;height:10px;border:1px solid #767676;border-radius:2.5px;background:#fff"></div>
 <!-- checked -->
 <div style="position:absolute;left:46px;top:180px;width:13px;height:13px;border-radius:3.5px;background:#9cc3f5"></div>
 <div style="position:absolute;left:47px;top:181px;width:11px;height:11px;border-radius:2.5px;background:#1559c4"></div>
 <svg style="position:absolute;left:47px;top:181px" width="11" height="11"><path d="M2.3 5.6 L4.6 7.9 L8.8 3.2" fill="none" stroke="#fff" stroke-width="1.7"/></svg>
 <div class="cb" style="left:99px;top:267px"></div>
 <div class="cb" style="left:186px;top:380px"></div>
<svg style="position:absolute;left:0;top:0;overflow:visible" width="60" height="420">
<g transform="translate(-23 -49)">
<path d="M43.2 347 L49.5 353" stroke="#c0272d" stroke-width="1.5" fill="none"/><path d="M51.6 355 L51.6 349.2 L45.6 355 Z" fill="#c0272d"/>
<path d="M43.2 382.4 L49.5 376.2" stroke="#0a9a0a" stroke-width="1.5" fill="none"/><path d="M51.6 374.2 L45.8 374.2 L51.6 380.2 Z" fill="#0a9a0a"/>
<path d="M46.9 412 L46.9 403" stroke="#1757c2" stroke-width="1.5" fill="none"/><path d="M46.9 400.8 L51.2 405.2 L42.6 405.2 Z" fill="#1757c2"/>
</g></svg>
<div class="t" style="left:6.3px;top:8.0px;font-size:13px;color:#333;font-weight:bold;transform:scaleX(0.9438)">Mass and section properties</div>
<div class="t" style="left:98.2px;top:34.7px;font-size:13px;color:#1353b5;font-weight:normal;transform:scaleX(0.9604)">Part</div>
<div class="t" style="left:317.1px;top:34.7px;font-size:13px;color:#444;font-weight:normal;transform:scaleX(0.8510)">Face</div>
<div class="t" style="left:9.5px;top:68.7px;font-size:9.5px;color:#555;font-weight:normal;transform:scaleX(1.0470)">Instances to measure</div>
<div class="t" style="left:10.1px;top:86.5px;font-size:13px;color:#555;font-weight:normal;transform:scaleX(0.9491)">CRANK</div>
<div class="t" style="left:9.6px;top:118.0px;font-size:13px;color:#666;font-weight:normal;transform:scaleX(0.9231)">Mate connector for reference frame</div>
<div class="t" style="left:20.2px;top:151.4px;font-size:14px;color:#4a4a4a;font-weight:normal;transform:scaleX(0.9378)">Show calculation variance</div>
<div class="t" style="left:4.7px;top:181.2px;font-size:13px;color:#525252;font-weight:normal;transform:scaleX(0.8982)">Mass</div>
<div class="t" style="left:63.4px;top:180.4px;font-size:14px;color:#4a4a4a;font-weight:normal;transform:scaleX(0.9071)">Override</div>
<div class="t r" style="right:8.5px;top:181.4px;font-size:14px;color:#333;font-weight:normal;transform:scaleX(0.9352)">1.694 lb</div>
<div class="t" style="left:5.1px;top:211.2px;font-size:13px;color:#525252;font-weight:normal;transform:scaleX(0.9153)">Volume</div>
<div class="t r" style="right:8.5px;top:211.4px;font-size:14px;color:#5f5f5f;font-weight:normal;transform:scaleX(0.9342)">6.724 in³</div>
<div class="t" style="left:5.6px;top:239.0px;font-size:13px;color:#525252;font-weight:normal;transform:scaleX(0.8907)">Surface area</div>
<div class="t r" style="right:8.5px;top:239.1px;font-size:14px;color:#5f5f5f;font-weight:normal;transform:scaleX(0.9377)">64.233 in²</div>
<div class="t" style="left:5.6px;top:266.8px;font-size:13px;color:#525252;font-weight:normal;transform:scaleX(0.8984)">Center of mass</div>
<div class="t" style="left:115.3px;top:266.0px;font-size:14px;color:#525252;font-weight:normal;transform:scaleX(0.9090)">Override</div>
<div class="t" style="left:7.6px;top:294.6px;font-size:15.5px;color:#8a8a8a;font-weight:normal;transform:scaleX(0.8991)">X</div>
<div class="t" style="left:7.6px;top:322.0px;font-size:15.5px;color:#8a8a8a;font-weight:normal;transform:scaleX(0.8991)">Y</div>
<div class="t" style="left:7.6px;top:350.0px;font-size:15.5px;color:#8a8a8a;font-weight:normal;transform:scaleX(0.9822)">Z</div>
<div class="t r" style="right:8.5px;top:296.4px;font-size:14px;color:#5f5f5f;font-weight:normal;transform:scaleX(0.9261)">-1.764e-6 in</div>
<div class="t r" style="right:8.5px;top:324.1px;font-size:14px;color:#5f5f5f;font-weight:normal;transform:scaleX(0.9298)">-0.011 in</div>
<div class="t r" style="right:8.5px;top:352.0px;font-size:14px;color:#5f5f5f;font-weight:normal;transform:scaleX(0.9122)">-1.422 in</div>
<div class="t" style="left:4.7px;top:379.7px;font-size:13px;color:#525252;font-weight:normal;transform:scaleX(0.9134)">Mass moments of inertia (in² lb)</div>
<div class="t" style="left:202.6px;top:378.9px;font-size:14px;color:#525252;font-weight:normal;transform:scaleX(0.9146)">Override</div>
<div class="t" style="left:7.3px;top:409.0px;font-size:13px;color:#525252;font-weight:normal;transform:scaleX(0.8995)">Lxx</div>
<div class="t r" style="right:300.5px;top:408.5px;font-size:14px;color:#5f5f5f;font-weight:normal;transform:scaleX(0.9300)">3.054</div>
<div class="t" style="left:153.4px;top:409.0px;font-size:13px;color:#525252;font-weight:normal;transform:scaleX(0.8995)">Lxy</div>
<div class="t r" style="right:154.7px;top:408.5px;font-size:14px;color:#5f5f5f;font-weight:normal;transform:scaleX(0.9300)">-0.03</div>
<div class="t" style="left:299.5px;top:409.0px;font-size:13px;color:#525252;font-weight:normal;transform:scaleX(0.8995)">Lxz</div>
<div class="t r" style="right:8.1px;top:408.5px;font-size:14px;color:#5f5f5f;font-weight:normal;transform:scaleX(0.9300)">-3.354e-6</div>
<div class="t" style="left:7.3px;top:437.5px;font-size:13px;color:#525252;font-weight:normal;transform:scaleX(0.9215)">Lyx</div>
<div class="t r" style="right:300.5px;top:437.0px;font-size:14px;color:#5f5f5f;font-weight:normal;transform:scaleX(0.9300)">-0.03</div>
<div class="t" style="left:153.4px;top:437.5px;font-size:13px;color:#525252;font-weight:normal;transform:scaleX(0.9215)">Lyy</div>
<div class="t r" style="right:154.7px;top:437.0px;font-size:14px;color:#5f5f5f;font-weight:normal;transform:scaleX(0.9300)">2.183</div>
<div class="t" style="left:299.5px;top:437.5px;font-size:13px;color:#525252;font-weight:normal;transform:scaleX(0.9215)">Lyz</div>
<div class="t r" style="right:8.1px;top:437.0px;font-size:14px;color:#5f5f5f;font-weight:normal;transform:scaleX(0.9300)">0.059</div>
<div class="t" style="left:7.3px;top:465.4px;font-size:13px;color:#525252;font-weight:normal;transform:scaleX(0.8995)">Lzx</div>
<div class="t r" style="right:300.5px;top:464.9px;font-size:14px;color:#5f5f5f;font-weight:normal;transform:scaleX(0.9300)">-3.354e-6</div>
<div class="t" style="left:153.4px;top:465.4px;font-size:13px;color:#525252;font-weight:normal;transform:scaleX(0.8995)">Lzy</div>
<div class="t r" style="right:154.7px;top:464.9px;font-size:14px;color:#5f5f5f;font-weight:normal;transform:scaleX(0.9300)">0.059</div>
<div class="t" style="left:299.5px;top:465.4px;font-size:13px;color:#525252;font-weight:normal;transform:scaleX(0.8995)">Lzz</div>
<div class="t r" style="right:8.1px;top:464.9px;font-size:14px;color:#5f5f5f;font-weight:normal;transform:scaleX(0.9300)">2.263</div>
<div class="ln" style="left:118px;top:198px;width:317px"></div>
<div class="ln" style="left:50px;top:228px;width:385px"></div>
<div class="ln" style="left:77px;top:256px;width:358px"></div>
<div class="ln" style="left:36px;top:313px;width:399px"></div>
<div class="ln" style="left:36px;top:341px;width:399px"></div>
<div class="ln" style="left:36px;top:369px;width:399px"></div>
<div class="ln" style="left:32px;top:426px;width:111px"></div>
<div class="ln" style="left:178px;top:426px;width:111px"></div>
<div class="ln" style="left:324px;top:426px;width:111px"></div>
<div class="ln" style="left:32px;top:454px;width:111px"></div>
<div class="ln" style="left:178px;top:454px;width:111px"></div>
<div class="ln" style="left:324px;top:454px;width:111px"></div>
<div class="ln" style="left:32px;top:482px;width:111px"></div>
<div class="ln" style="left:178px;top:482px;width:111px"></div>
<div class="ln" style="left:324px;top:482px;width:111px"></div>
 <svg style="position:absolute;left:422px;top:511px" width="14" height="14"><circle cx="7" cy="7" r="6" fill="#999"/><path d="M4.7 5.3 A2.35 2.35 0 1 1 8.3 7.2 Q7 8 7 9.2" fill="none" stroke="#fff" stroke-width="1.7"/><circle cx="7" cy="11" r="1" fill="#fff"/></svg>
</div>
<svg style="position:absolute;left:0;top:0" width="1122" height="659" viewBox="0 0 1122 659">
<g fill="none" stroke="#b4b4b4" stroke-width="1">
<path d="M1122 131.5 H1091.5 V329.5 H1122"/>
<path d="M1091.5 164.5 H1122 M1091.5 197.5 H1122 M1091.5 230.5 H1122 M1091.5 263.5 H1122 M1091.5 296.5 H1122"/>
</g>
<!-- icon1 list -->
<rect x="1099.3" y="140.2" width="17.4" height="17" rx="3.2" fill="#fff" stroke="#222" stroke-width="1.3"/>
<path d="M1102.3 145 H1112.3 M1105 148.4 H1114 M1105 151.7 H1114 M1105 155 H1114 M1104.6 145 V155" stroke="#222" stroke-width="1.4" fill="none"/>
<!-- icon2 cube -->
<path d="M1102.3 179 L1109.5 175 L1117 179 L1117 186.5 L1109.7 190.6 L1102.3 186.5 Z M1102.3 179 L1109.7 183 L1117 179 M1109.7 183 V190.6" fill="#fff" stroke="#222" stroke-width="1.1" stroke-linejoin="round"/>
<rect x="1098.2" y="172" width="9.6" height="7.6" fill="#1d5fd2"/>
<path d="M1101.4 172 V179.6 M1104.6 172 V179.6 M1098.2 174.6 H1107.8 M1098.2 177.1 H1107.8" stroke="#fff" stroke-width=".7"/>
<!-- icon3 -->
<rect x="1099.6" y="206" width="4.8" height="4.8" fill="#aaa" stroke="#555" stroke-width=".8"/>
<path d="M1102.5 212.5 L1104 214 L1109 215.6" stroke="#1d5fd2" stroke-width="1.2" stroke-dasharray="2 1.2" fill="none"/>
<path d="M1105.8 219 L1109.5 217 L1110.5 217 L1110.5 213.5 L1113.5 212 L1116.8 213.5 L1116.8 220.5 L1110 223.5 L1105.8 221.8 Z" fill="#e9e9e9" stroke="#333" stroke-width="1" stroke-linejoin="round"/>
<path d="M1105.8 219 L1110 220.6 L1116.8 217.5 M1110 220.6 V223.5 M1110.5 217 L1113.3 218" stroke="#333" stroke-width=".8" fill="none"/>
<!-- icon4 -->
<rect x="1099.4" y="250" width="17" height="6.8" fill="#fff" stroke="#222" stroke-width="1.2"/>
<rect x="1109.6" y="239.8" width="7" height="11" fill="none" stroke="#1d5fd2" stroke-width="1.1" stroke-dasharray="1.8 1.2"/>
<circle cx="1113.2" cy="253.2" r="3.1" fill="#fff" stroke="#1d5fd2" stroke-width="1.1"/>
<circle cx="1113.2" cy="253.2" r="1.5" fill="#bbb" stroke="#555" stroke-width=".7"/>
<!-- icon5 gem -->
<g stroke="#fff" stroke-width=".7" stroke-linejoin="round">
<path d="M1108.2 271.5 L1113.5 274.2 L1108.3 280.5 L1102.9 274.2 Z" fill="#9fd6f2"/>
<path d="M1102.9 274.2 L1108.3 280.5 L1099.6 284 Z" fill="#1a5fcc"/>
<path d="M1099.6 284 L1108.3 280.5 L1108.3 290 L1102.5 287.5 Z" fill="#0f48a8"/>
<path d="M1113.5 274.2 L1116.8 284 L1108.3 280.5 Z" fill="#b5b5b5"/>
<path d="M1116.8 284 L1108.3 280.5 L1108.3 290 L1114 287.5 Z" fill="#8d8d8d"/>
</g>
<!-- icon6 (x) -->
<rect x="1098" y="304" width="10" height="7.6" fill="#222"/>
<path d="M1101.3 304 V311.6 M1104.6 304 V311.6 M1098 306.5 H1108 M1098 309 H1108" stroke="#fff" stroke-width=".7"/>
<path d="M1100.2 305 Q1096.8 313 1100.6 321.5" stroke="#222" stroke-width="1.7" fill="none"/>
<path d="M1115 305.5 Q1118.6 313 1114.6 321.5" stroke="#222" stroke-width="1.7" fill="none"/>
<path d="M1102.8 318.5 Q1104.5 319.5 1106 316.5 L1109 312 Q1110.5 309.8 1112.4 311 M1104.8 311.2 Q1106.6 310.2 1107.3 312.8 L1108.6 317 Q1109.3 319.6 1111.4 318.3" stroke="#222" stroke-width="1.7" fill="none" stroke-linecap="round"/>
<!-- bottom icons: tape -->
<g fill="none" stroke="#222" stroke-width="1.1">
<ellipse cx="1035.4" cy="646.3" rx="5.2" ry="3"/>
<ellipse cx="1035.4" cy="646.1" rx="2.4" ry="1.2" stroke-width=".8"/>
<path d="M1030.2 646.3 V649.6 M1040.6 646.3 V652 Q1040.6 654.3 1038.5 655"/>
<path d="M1025.4 649.8 H1038.5 V655 H1025.4 Z" fill="#fff"/>
<path d="M1027.8 653 V655 M1030.2 652.2 V655 M1032.6 653 V655 M1035 652.2 V655 M1037 653 V655" stroke-width=".7"/>
</g>
<!-- protractor -->
<path d="M1058.4 655.2 V653.5 A9.6 10.2 0 0 1 1077.6 653.5 V655.2 Z" fill="#fff" stroke="#222" stroke-width="1.2" stroke-linejoin="round"/>
<path d="M1062.2 653 A5.8 6.4 0 0 1 1073.8 653 L1071.2 653 A3.2 3 0 0 0 1064.8 653 Z" fill="#fff" stroke="#222" stroke-width="1.1" stroke-linejoin="round"/>
<path d="M1060 652 A8 8.8 0 0 1 1076 652" fill="none" stroke="#555" stroke-width=".9" stroke-dasharray=".7 1"/>
<!-- scale -->
<path d="M1098.5 642.6 H1107.6" stroke="#222" stroke-width="1.2"/>
<path d="M1103.05 642.6 V654.5" stroke="#888" stroke-width="1.3"/>
<path d="M1099.4 642.8 L1096.8 650.3 M1099.4 642.8 L1100.4 650.3 M1106.7 642.8 L1105.7 650.3 M1106.7 642.8 L1109.3 650.3" stroke="#222" stroke-width=".9" fill="none"/>
<path d="M1096 651 H1100.8 M1105.3 651 H1110.1" stroke="#222" stroke-width="1.7"/>
<path d="M1096 655.2 H1110.1" stroke="#222" stroke-width="1.8"/>
</svg>

</body></html>
